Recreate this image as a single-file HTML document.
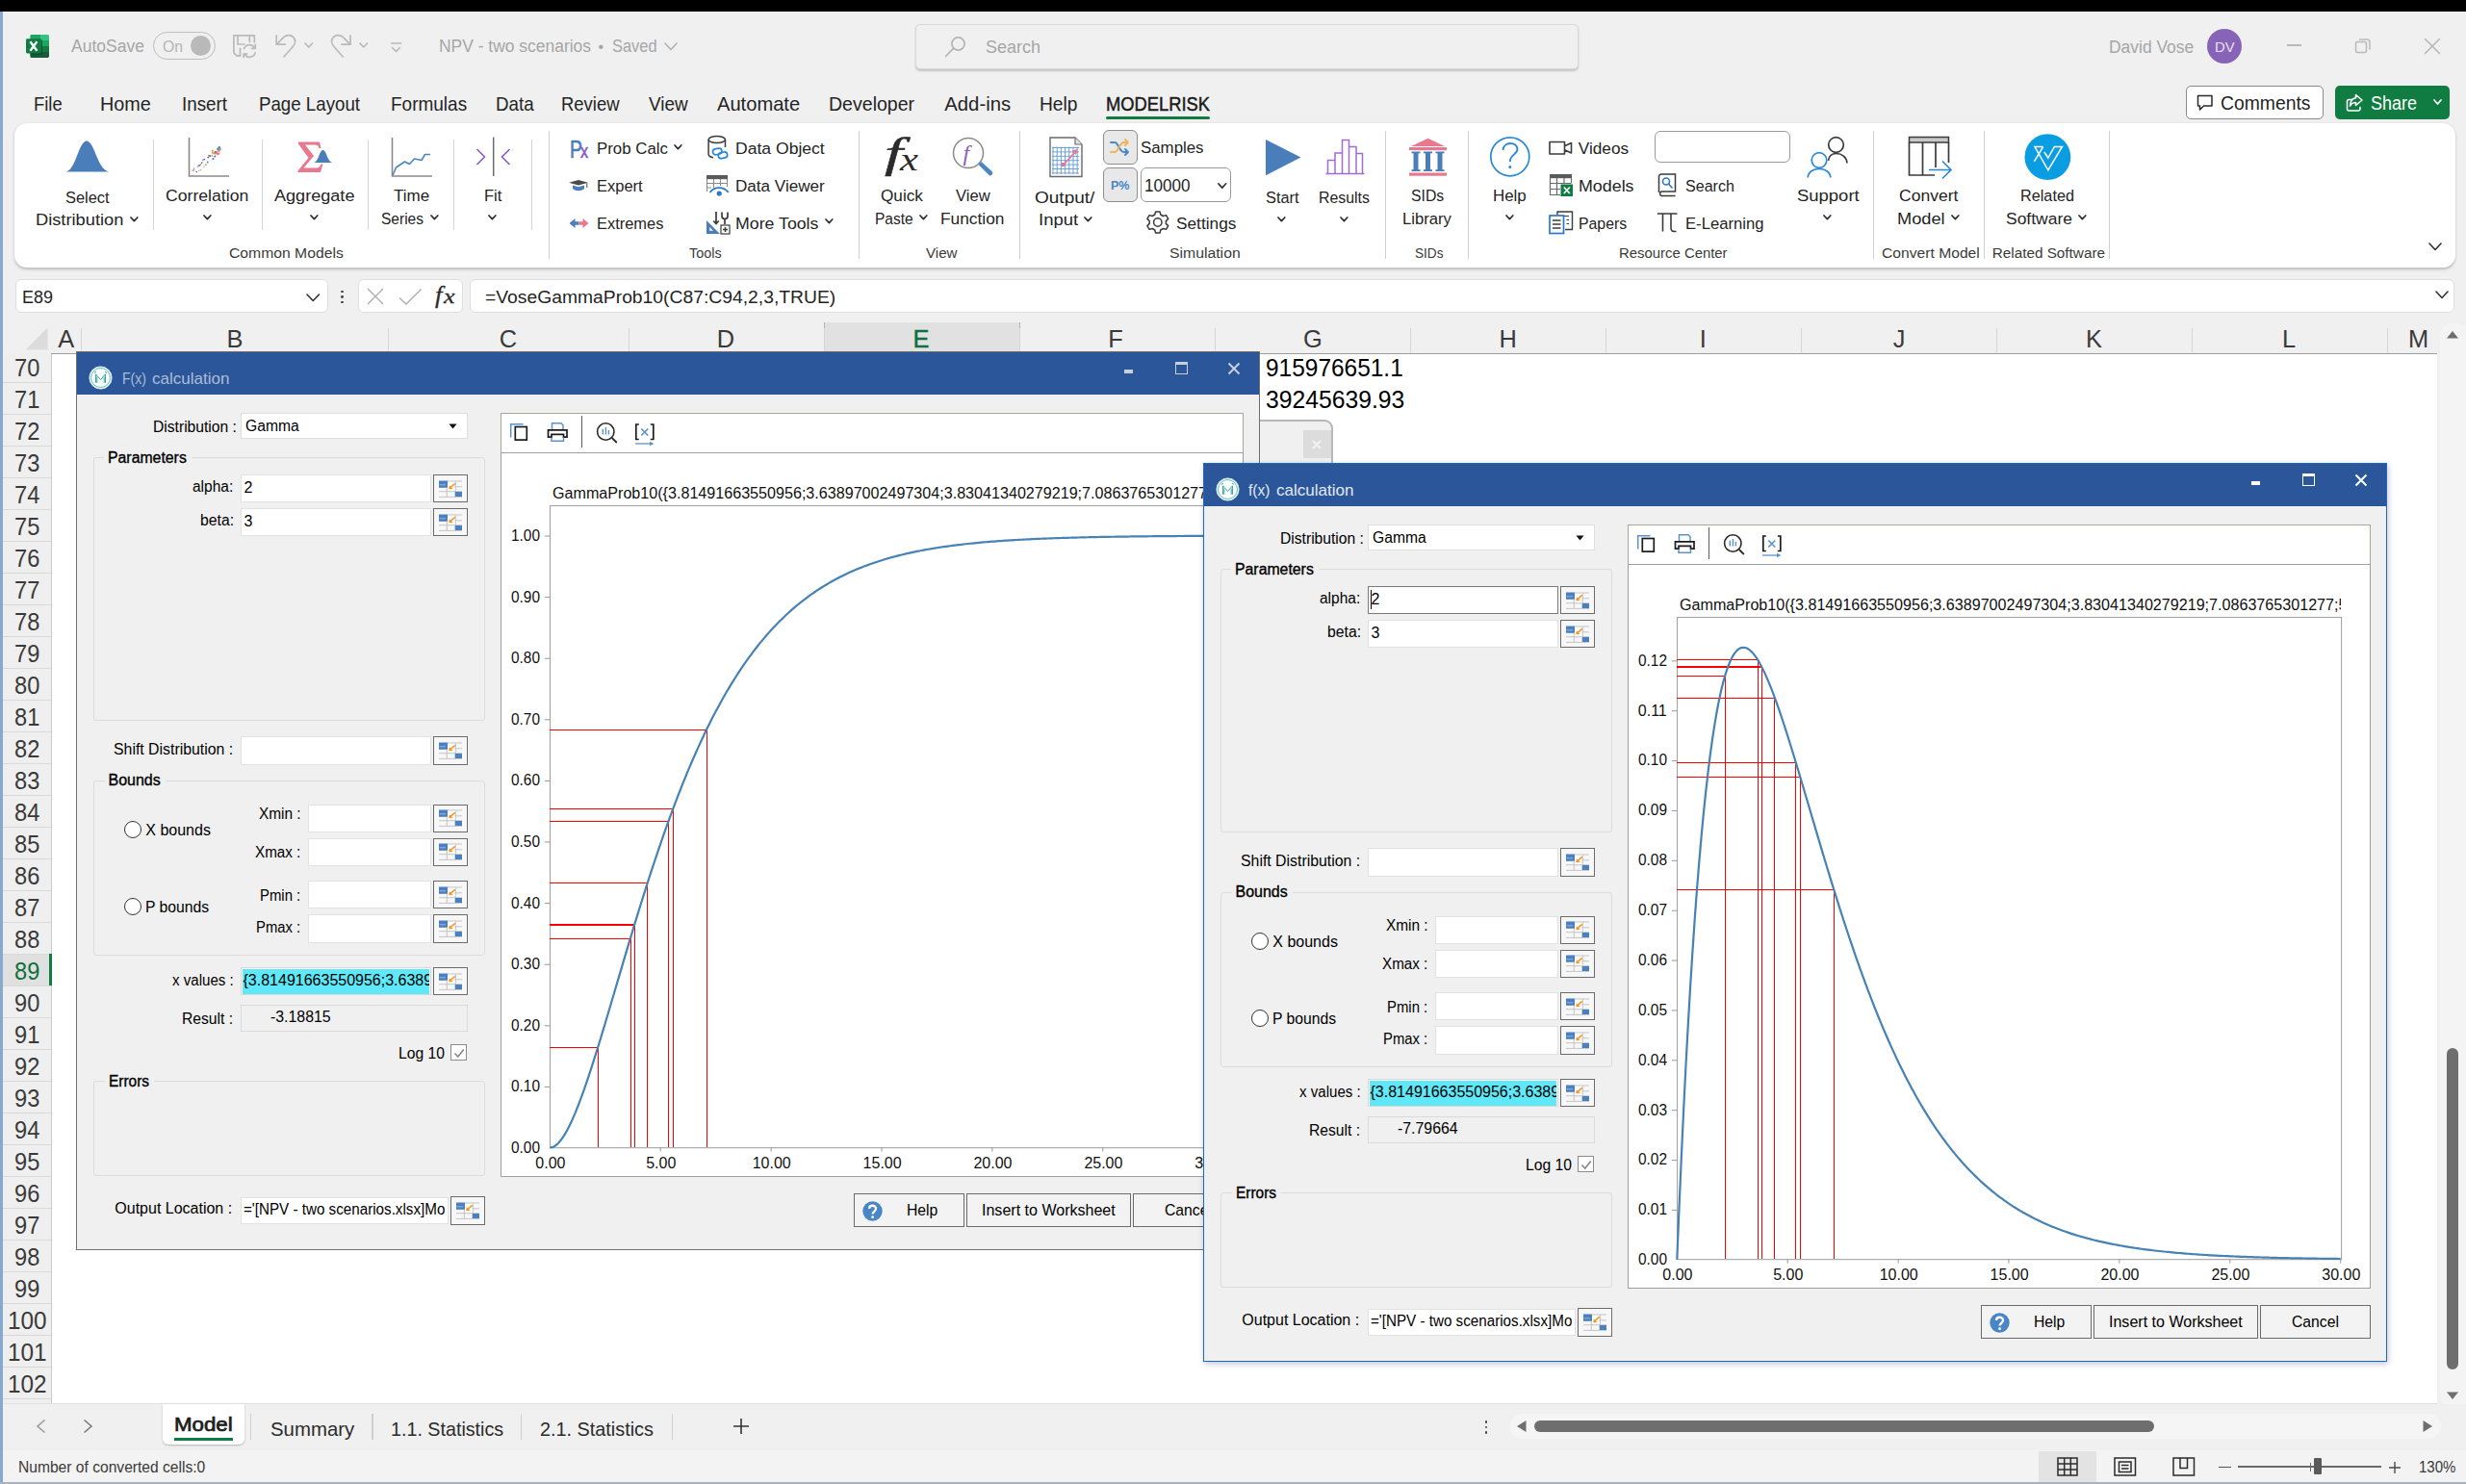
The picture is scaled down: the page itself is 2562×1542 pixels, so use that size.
<!DOCTYPE html>
<html><head><meta charset="utf-8"><title>Excel</title>
<style>
html,body{margin:0;padding:0;}
body{width:2562px;height:1542px;overflow:hidden;position:relative;background:#f0f0f0;font-family:"Liberation Sans",sans-serif;}
.b{position:absolute;box-sizing:border-box;}
.t{position:absolute;white-space:nowrap;line-height:1;transform-origin:0 50%;color:#000;}
svg.b{overflow:visible;}
</style></head><body>
<div class="b" style="left:0px;top:0px;width:2562px;height:1542px;background:#f0f0f0;"></div>
<div class="b" style="left:0px;top:0px;width:2562px;height:12px;background:#000;"></div>
<div class="b" style="left:0px;top:12px;width:3px;height:1530px;background:#86a9d2;"></div>
<div class="b" style="left:0px;top:1540px;width:2562px;height:2px;background:#a9b3bf;"></div>
<svg class="b" style="left:27px;top:36px;" width="24" height="24" viewBox="0 0 24 24">
<clipPath id="xlc"><rect x="4.2" y="0" width="19.8" height="24" rx="1.4"/></clipPath>
<g clip-path="url(#xlc)"><rect x="4.2" y="0" width="10.8" height="6" fill="#21a366"/><rect x="15" y="0" width="9" height="6" fill="#33c481"/>
<rect x="4.2" y="6" width="10.8" height="6" fill="#107c41"/><rect x="15" y="6" width="9" height="6" fill="#21a366"/>
<rect x="4.2" y="12" width="10.8" height="6" fill="#185c37"/><rect x="15" y="12" width="9" height="6" fill="#107c41"/>
<rect x="4.2" y="18" width="19.8" height="6" fill="#185c37"/>
<rect x="1" y="5.2" width="16" height="15.4" rx="1.4" fill="#0a2e1b" opacity="0.55"/></g>
<rect x="0" y="4.2" width="16" height="15.2" rx="1.4" fill="#107c41"/>
<path d="M4.4 7.2 L11.4 16.8 M11.4 7.2 L4.4 16.8" stroke="#fff" stroke-width="2.3"/></svg>
<div class="t" style="left:74px;top:39px;font-size:18px;transform:scaleX(0.9738);color:#a6a6a6;">AutoSave</div>
<div class="b" style="left:159px;top:33px;width:65px;height:29px;border:1.5px solid #bdbdbd;border-radius:15px;"></div>
<div class="t" style="left:169px;top:41px;font-size:16px;transform:scaleX(0.9839);color:#b4b4b4;">On</div>
<div class="b" style="left:198px;top:37px;width:21px;height:21px;background:#b9b9b9;border-radius:11px;"></div>
<svg class="b" style="left:241px;top:35px;" width="27" height="27" viewBox="0 0 27 27"><g fill="none" stroke="#bababa" stroke-width="1.7" stroke-linejoin="miter">
<path d="M9.3 23.2 H5.2 L1.9 19.800 V1.900 H23.300 V9.500"/><path d="M6 1.900 V11 H13.500 M18.300 1.900 V9"/><path d="M8.500 14.800 V23"/>
<path d="M12.300 16.300 a6 6 0 0 1 11.300 -1.200 M24.300 19.200 a6 6 0 0 1 -11.300 1.800"/><path d="M24.300 10.800 V15.300 H19.800 M12.200 25.300 V21 H16.500"/></g></svg>
<svg class="b" style="left:285px;top:34px;" width="26" height="28" viewBox="0 0 26 28"><path d="M2.2 2.2 V12.2 H11.900 M2.600 11.900 L9 5.300 C12 2 17 1.600 19.800 4.600 C22.600 7.800 22 11.500 19 14.800 L9.500 25.500" fill="none" stroke="#bababa" stroke-width="1.7"/></svg>
<svg class="b" style="left:316.45px;top:44.3px;" width="9.5" height="6" viewBox="0 0 9.5 6"><path d="M1 1 L4.75 5 L8.5 1" fill="none" stroke="#b8b8b8" stroke-width="1.7" stroke-linecap="round" stroke-linejoin="round"/></svg>
<svg class="b" style="left:342px;top:34px;" width="26" height="28" viewBox="0 0 26 28"><path d="M2.2 2.2 V12.2 H11.900 M2.600 11.900 L9 5.300 C12 2 17 1.600 19.800 4.600 C22.600 7.800 22 11.500 19 14.800 L9.500 25.500" fill="none" stroke="#bababa" stroke-width="1.7" transform="translate(24.200,0) scale(-1,1)"/></svg>
<svg class="b" style="left:373.45px;top:44.3px;" width="9.5" height="6" viewBox="0 0 9.5 6"><path d="M1 1 L4.75 5 L8.5 1" fill="none" stroke="#b8b8b8" stroke-width="1.7" stroke-linecap="round" stroke-linejoin="round"/></svg>
<svg class="b" style="left:404px;top:43px;" width="16" height="14" viewBox="0 0 16 14"><path d="M2.5 2 H12.5" stroke="#b8b8b8" stroke-width="1.6" stroke-linecap="round"/><path d="M3.5 6.5 L7.5 10.5 L11.5 6.5" fill="none" stroke="#b8b8b8" stroke-width="1.6" stroke-linecap="round" stroke-linejoin="round"/></svg>
<div class="t" style="left:455.5px;top:39px;font-size:18px;transform:scaleX(0.9690);color:#a6a6a6;">NPV - two scenarios</div>
<div class="t" style="left:621.5px;top:41px;font-size:16px;color:#a6a6a6;">•</div>
<div class="t" style="left:635.5px;top:39px;font-size:18px;transform:scaleX(0.9112);color:#a6a6a6;">Saved</div>
<svg class="b" style="left:690px;top:44.25px;" width="14" height="8.5" viewBox="0 0 14 8.5"><path d="M1 1 L7 7.5 L13 1" fill="none" stroke="#b4b4b4" stroke-width="1.7" stroke-linecap="round" stroke-linejoin="round"/></svg>
<div class="b" style="left:950.5px;top:24.5px;width:689.5px;height:47px;background:#f0f0f0;border:1px solid #d9d9d9;border-radius:5px;box-shadow:0 1.5px 2px rgba(0,0,0,.18);"></div>
<svg class="b" style="left:980px;top:36px;" width="26" height="26" viewBox="0 0 26 26"><circle cx="15.5" cy="9.5" r="6.6" fill="none" stroke="#b4b4b4" stroke-width="1.7"/><path d="M10.8 14.2 L2.5 22.5" stroke="#b4b4b4" stroke-width="1.7" stroke-linecap="round"/></svg>
<div class="t" style="left:1023.5px;top:40px;font-size:18.5px;transform:scaleX(0.9726);color:#a6a6a6;">Search</div>
<div class="t" style="left:2190.5px;top:40px;font-size:18px;transform:scaleX(0.9686);color:#a6a6a6;">David Vose</div>
<div class="b" style="left:2293px;top:30px;width:36px;height:36px;background:#8764b8;border-radius:18px;"></div>
<div class="t" style="left:2300.75px;top:41px;font-size:15.5px;transform:scaleX(0.9522);color:#e9e0f5;">DV</div>
<div class="b" style="left:2375.5px;top:46px;width:15.5px;height:1.5px;background:#b9b9b9;"></div>
<svg class="b" style="left:2445px;top:38px;" width="20" height="20" viewBox="0 0 20 20"><rect x="2.5" y="5.5" width="11" height="11" rx="2" fill="none" stroke="#b9b9b9" stroke-width="1.5"/><path d="M6 3 H14 a3 3 0 0 1 3 3 V13.5" fill="none" stroke="#b9b9b9" stroke-width="1.5"/></svg>
<svg class="b" style="left:2517px;top:38px;" width="20" height="20" viewBox="0 0 20 20"><path d="M2.5 2.5 L17.5 17.5 M17.5 2.5 L2.5 17.5" stroke="#b4b4b4" stroke-width="1.5" stroke-linecap="round"/></svg>
<div class="t" style="left:35.2px;top:98px;font-size:20.3px;transform:scaleX(0.9082);color:#242424;">File</div>
<div class="t" style="left:104.3px;top:98px;font-size:20.3px;transform:scaleX(0.9767);color:#242424;">Home</div>
<div class="t" style="left:188.6px;top:98px;font-size:20.3px;transform:scaleX(0.9257);color:#242424;">Insert</div>
<div class="t" style="left:268.5px;top:98px;font-size:20.3px;transform:scaleX(0.9219);color:#242424;">Page Layout</div>
<div class="t" style="left:405.6px;top:98px;font-size:20.3px;transform:scaleX(0.9361);color:#242424;">Formulas</div>
<div class="t" style="left:514.7px;top:98px;font-size:20.3px;transform:scaleX(0.9255);color:#242424;">Data</div>
<div class="t" style="left:583px;top:98px;font-size:20.3px;transform:scaleX(0.9096);color:#242424;">Review</div>
<div class="t" style="left:673.6px;top:98px;font-size:20.3px;transform:scaleX(0.9317);color:#242424;">View</div>
<div class="t" style="left:744.5px;top:98px;font-size:20.3px;transform:scaleX(0.9921);color:#242424;">Automate</div>
<div class="t" style="left:861.4px;top:98px;font-size:20.3px;transform:scaleX(0.9640);color:#242424;">Developer</div>
<div class="t" style="left:981.3px;top:98px;font-size:20.3px;color:#242424;">Add-ins</div>
<div class="t" style="left:1079.6px;top:98px;font-size:20.3px;transform:scaleX(0.9459);color:#242424;">Help</div>
<div class="t" style="left:1148.6px;top:98px;font-size:20.3px;transform:scaleX(0.9033);color:#1a1a1a;-webkit-text-stroke:0.45px #1a1a1a;">MODELRISK</div>
<div class="b" style="left:1148.5px;top:120.5px;width:108.5px;height:3px;background:#107c41;border-radius:1.5px;"></div>
<div class="b" style="left:2270.5px;top:88.5px;width:143px;height:35px;background:#fff;border:1px solid #8a8a8a;border-radius:5px;"></div>
<svg class="b" style="left:2281px;top:97px;" width="20" height="20" viewBox="0 0 20 20"><path d="M2.5 2.5 H17 V13 H8.5 L4.5 17 V13 H2.5 Z" fill="none" stroke="#2b2b2b" stroke-width="1.5" stroke-linejoin="round"/></svg>
<div class="t" style="left:2306.5px;top:98px;font-size:19.5px;transform:scaleX(0.9917);color:#242424;">Comments</div>
<div class="b" style="left:2426px;top:88.5px;width:119px;height:35px;background:#107c41;border-radius:5px;"></div>
<svg class="b" style="left:2436px;top:96px;" width="20" height="22" viewBox="0 0 20 22"><g fill="none" stroke="#fff" stroke-width="1.6" stroke-linejoin="round" stroke-linecap="round"><path d="M8 7.5 H4.5 a2 2 0 0 0 -2 2 V17 a2 2 0 0 0 2 2 H14 a2 2 0 0 0 2 -2 V15.5"/><path d="M11.5 2.5 L18 8 L11.5 13.5 V10.5 C8.5 10.5 7 11.5 5.5 14 C5.8 9.5 8 6 11.5 5.7 Z"/></g></svg>
<div class="t" style="left:2462.5px;top:98px;font-size:19.5px;transform:scaleX(0.9226);color:#fff;">Share</div>
<svg class="b" style="left:2528px;top:103px;" width="9" height="6" viewBox="0 0 9 6"><path d="M1 1 L4.5 5 L8 1" fill="none" stroke="#fff" stroke-width="1.7" stroke-linecap="round" stroke-linejoin="round"/></svg>
<div class="b" style="left:15px;top:128px;width:2535.5px;height:150px;background:#fff;border-radius:13px;box-shadow:0 1.5px 3px rgba(0,0,0,.22);"></div>
<div class="b" style="left:158.9px;top:145px;width:1.2px;height:93.5px;background:#d4d4d4;"></div>
<div class="b" style="left:271.8px;top:145px;width:1.2px;height:93.5px;background:#d4d4d4;"></div>
<div class="b" style="left:381.8px;top:145px;width:1.2px;height:93.5px;background:#d4d4d4;"></div>
<div class="b" style="left:470.7px;top:145px;width:1.2px;height:93.5px;background:#d4d4d4;"></div>
<div class="b" style="left:551.6px;top:145px;width:1.2px;height:93.5px;background:#d4d4d4;"></div>
<div class="b" style="left:569.9px;top:135.5px;width:1.2px;height:133px;background:#cfcfcf;"></div>
<div class="b" style="left:891.7px;top:135.5px;width:1.2px;height:133px;background:#cfcfcf;"></div>
<div class="b" style="left:1058.7px;top:135.5px;width:1.2px;height:133px;background:#cfcfcf;"></div>
<div class="b" style="left:1438.8px;top:135.5px;width:1.2px;height:133px;background:#cfcfcf;"></div>
<div class="b" style="left:1524.7px;top:135.5px;width:1.2px;height:133px;background:#cfcfcf;"></div>
<div class="b" style="left:1945.9px;top:135.5px;width:1.2px;height:133px;background:#cfcfcf;"></div>
<div class="b" style="left:2060.9px;top:135.5px;width:1.2px;height:133px;background:#cfcfcf;"></div>
<div class="b" style="left:2191px;top:135.5px;width:1.2px;height:133px;background:#cfcfcf;"></div>
<svg class="b" style="left:66px;top:143px;" width="52" height="38" viewBox="0 0 52 38"><path d="M2 35.5 C13 34 15 5 24 3.2 C33 5 35 34 48 35.5 Z" fill="#4a7ebb"/></svg>
<div class="t" style="left:68.4px;top:197px;font-size:17.2px;transform:scaleX(0.9540);color:#242424;">Select</div>
<div class="t" style="left:37px;top:220px;font-size:17.2px;transform:scaleX(1.0624);color:#242424;">Distribution</div>
<svg class="b" style="left:135.1px;top:224.65px;" width="8.8" height="5.7" viewBox="0 0 8.8 5.7"><path d="M1 1 L4.4 4.7 L7.8 1" fill="none" stroke="#2e2e2e" stroke-width="1.7" stroke-linecap="round" stroke-linejoin="round"/></svg>
<svg class="b" style="left:195px;top:143px;" width="44" height="43" viewBox="0 0 44 43"><path d="M1.5 0 V40 H43" fill="none" stroke="#8a8a8a" stroke-width="1.6"/><circle cx="10.4" cy="30.1" r="0.7" fill="#4a7ebb"/><circle cx="6.0" cy="34.7" r="0.6" fill="#f0b24a"/><circle cx="28.9" cy="15.3" r="1.2" fill="#4a7ebb"/><circle cx="17.1" cy="30.1" r="0.8" fill="#f0b24a"/><circle cx="13.9" cy="33.7" r="0.7" fill="#f0b24a"/><circle cx="26.1" cy="16.0" r="1.2" fill="#f0b24a"/><circle cx="8.9" cy="35.6" r="0.6" fill="#4a7ebb"/><circle cx="11.5" cy="29.0" r="0.7" fill="#4a7ebb"/><circle cx="26.2" cy="14.9" r="1.2" fill="#f0b24a"/><circle cx="28.9" cy="15.5" r="1.2" fill="#4a7ebb"/><circle cx="13.5" cy="27.7" r="0.8" fill="#f0b24a"/><circle cx="25.7" cy="13.8" r="1.2" fill="#f0b24a"/><circle cx="20.7" cy="25.5" r="0.9" fill="#4a7ebb"/><circle cx="31.4" cy="12.0" r="1.3" fill="#4a7ebb"/><circle cx="22.9" cy="19.0" r="1.0" fill="#e8748c"/><circle cx="25.3" cy="19.0" r="1.1" fill="#f0b24a"/><circle cx="6.5" cy="32.2" r="0.6" fill="#4a7ebb"/><circle cx="21.3" cy="20.5" r="1.0" fill="#4a7ebb"/><circle cx="11.5" cy="28.5" r="0.8" fill="#e8748c"/><circle cx="32.5" cy="16.6" r="1.2" fill="#f0b24a"/><circle cx="5.4" cy="39.3" r="0.6" fill="#e8748c"/><circle cx="31.1" cy="17.1" r="1.2" fill="#e8748c"/><circle cx="12.4" cy="29.1" r="0.8" fill="#4a7ebb"/><circle cx="13.2" cy="28.1" r="0.7" fill="#4a7ebb"/><circle cx="4.0" cy="34.0" r="0.6" fill="#f0b24a"/><circle cx="33.3" cy="12.1" r="1.3" fill="#4a7ebb"/><circle cx="16.0" cy="23.2" r="0.9" fill="#e8748c"/><circle cx="26.4" cy="22.1" r="1.1" fill="#4a7ebb"/><circle cx="7.1" cy="33.8" r="0.6" fill="#e8748c"/><circle cx="9.4" cy="35.5" r="0.6" fill="#e8748c"/><circle cx="22.1" cy="18.8" r="1.0" fill="#e8748c"/><circle cx="14.8" cy="26.1" r="0.9" fill="#4a7ebb"/><circle cx="23.1" cy="19.0" r="1.0" fill="#4a7ebb"/><circle cx="5.6" cy="33.9" r="0.6" fill="#4a7ebb"/><circle cx="26.4" cy="16.3" r="1.1" fill="#f0b24a"/><circle cx="9.5" cy="35.7" r="0.6" fill="#4a7ebb"/><circle cx="18.9" cy="27.9" r="0.9" fill="#e8748c"/><circle cx="17.3" cy="22.6" r="0.9" fill="#4a7ebb"/><circle cx="32.4" cy="13.8" r="1.2" fill="#e8748c"/><circle cx="28.3" cy="19.5" r="1.1" fill="#4a7ebb"/><circle cx="13.3" cy="33.4" r="0.7" fill="#f0b24a"/><circle cx="33.2" cy="11.4" r="1.2" fill="#f0b24a"/><circle cx="32.8" cy="10.2" r="1.3" fill="#4a7ebb"/><circle cx="11.8" cy="34.6" r="0.6" fill="#e8748c"/><circle cx="30.4" cy="15.4" r="1.2" fill="#e8748c"/><circle cx="28.3" cy="16.6" r="1.1" fill="#e8748c"/></svg>
<div class="t" style="left:172.4px;top:195px;font-size:17.2px;transform:scaleX(1.0259);color:#242424;">Correlation</div>
<svg class="b" style="left:210.8px;top:222.75px;" width="8.8" height="5.7" viewBox="0 0 8.8 5.7"><path d="M1 1 L4.4 4.7 L7.8 1" fill="none" stroke="#2e2e2e" stroke-width="1.7" stroke-linecap="round" stroke-linejoin="round"/></svg>
<svg class="b" style="left:307px;top:145px;" width="40" height="36" viewBox="0 0 40 36"><path d="M3 2.5 H25 L26.5 9 H24.5 C24 6.5 23 5.5 20 5.5 H10 L19 17 L8.5 29.5 H21 C24.5 29.5 25.5 28 26.5 25.5 H28.5 L26 34 H2.5 V32.5 L13.5 19 L3 4.5 Z" fill="#e8788f"/><path d="M19 24 C24 23.5 24.5 11.5 28.5 10.8 C32.5 11.5 33 23.5 38.5 24 Z" fill="#4a7ebb"/></svg>
<div class="t" style="left:285.3px;top:195px;font-size:17.2px;transform:scaleX(1.0519);color:#242424;">Aggregate</div>
<svg class="b" style="left:321.8px;top:222.75px;" width="8.8" height="5.7" viewBox="0 0 8.8 5.7"><path d="M1 1 L4.4 4.7 L7.8 1" fill="none" stroke="#2e2e2e" stroke-width="1.7" stroke-linecap="round" stroke-linejoin="round"/></svg>
<svg class="b" style="left:406px;top:143px;" width="44" height="43" viewBox="0 0 44 43"><path d="M1.5 0 V40 H43" fill="none" stroke="#8a8a8a" stroke-width="1.6"/><path d="M2 39 L5.5 31 L14.5 25 L19.5 27.5 L24.5 22 L32 23.5 L35.5 17.5 L41 17.5" fill="none" stroke="#4a86c5" stroke-width="1.6" stroke-linejoin="round"/></svg>
<div class="t" style="left:408.5px;top:195px;font-size:17.2px;transform:scaleX(0.9898);color:#242424;">Time</div>
<div class="t" style="left:395.8px;top:219px;font-size:17.2px;transform:scaleX(0.9023);color:#242424;">Series</div>
<svg class="b" style="left:446.9px;top:222.75px;" width="8.8" height="5.7" viewBox="0 0 8.8 5.7"><path d="M1 1 L4.4 4.7 L7.8 1" fill="none" stroke="#2e2e2e" stroke-width="1.7" stroke-linecap="round" stroke-linejoin="round"/></svg>
<svg class="b" style="left:494px;top:142px;" width="38" height="42" viewBox="0 0 38 42"><path d="M18.7 0.5 V41" stroke="#6a6a6a" stroke-width="1.5"/><path d="M1.5 13 L9.5 21 L1.5 29 M35.5 13 L27.5 21 L35.5 29" fill="none" stroke="#8a5cc7" stroke-width="1.6"/></svg>
<div class="t" style="left:502.6px;top:195px;font-size:17.2px;transform:scaleX(0.9629);color:#242424;">Fit</div>
<svg class="b" style="left:506.5px;top:222.75px;" width="8.8" height="5.7" viewBox="0 0 8.8 5.7"><path d="M1 1 L4.4 4.7 L7.8 1" fill="none" stroke="#2e2e2e" stroke-width="1.7" stroke-linecap="round" stroke-linejoin="round"/></svg>
<div class="t" style="left:237.5px;top:255px;font-size:15.3px;transform:scaleX(1.0273);color:#3b3b3b;">Common Models</div>
<div class="t" style="left:591.8px;top:142px;font-size:26.6px;transform:scaleX(0.7271);color:#4a7ebb;-webkit-text-stroke:0.700px #4a7ebb;">P</div>
<div class="t" style="left:603.1px;top:148px;font-size:19.5px;transform:scaleX(0.8308);color:#8a5cc7;-webkit-text-stroke:0.600px #8a5cc7;">x</div>
<div class="t" style="left:620px;top:146px;font-size:17.2px;transform:scaleX(0.9798);color:#242424;">Prob Calc</div>
<svg class="b" style="left:699.8px;top:150.35px;" width="8.8" height="5.7" viewBox="0 0 8.8 5.7"><path d="M1 1 L4.4 4.7 L7.8 1" fill="none" stroke="#2e2e2e" stroke-width="1.7" stroke-linecap="round" stroke-linejoin="round"/></svg>
<svg class="b" style="left:590px;top:186px;" width="22" height="14" viewBox="0 0 22 14"><path d="M1 3.8 L11 1 L21 3.8 L11 6.6 Z" fill="#4a4a4a"/><path d="M5 6.5 V10 C8 13 14 13 17 10 V6.5 L11 8.2 Z" fill="#4a7ebb"/><path d="M19.8 4.2 V9" stroke="#4a4a4a" stroke-width="1"/></svg>
<div class="t" style="left:620px;top:185px;font-size:17.2px;transform:scaleX(0.9596);color:#242424;">Expert</div>
<svg class="b" style="left:590.5px;top:225.5px;" width="21" height="12" viewBox="0 0 21 12"><path d="M0.5 6 L6.5 1 V4.2 H10.5 V7.8 H6.5 V11 Z" fill="#4a7ebb"/><path d="M20.5 6 L14.5 1 V4.2 H10.5 V7.8 H14.5 V11 Z" fill="#e8788f"/></svg>
<div class="t" style="left:620px;top:224px;font-size:17.2px;transform:scaleX(0.9555);color:#242424;">Extremes</div>
<svg class="b" style="left:734px;top:140px;" width="25" height="26" viewBox="0 0 25 26"><g fill="none" stroke="#3b3b3b" stroke-width="1.500"><ellipse cx="10.800" cy="5" rx="8.700" ry="3.600"/><path d="M2.100 5 V20.500 C2.500 22.300 4.500 23.300 7 23.800 M19.500 5 V13"/></g><g fill="none"><rect x="6.500" y="14.500" width="9.500" height="6" rx="3" transform="rotate(-12 11 17.500)" stroke="#fff" stroke-width="3.600"/><rect x="12.200" y="18.300" width="9.500" height="6" rx="3" transform="rotate(-12 17 21.300)" stroke="#fff" stroke-width="3.600"/><rect x="6.500" y="14.500" width="9.500" height="6" rx="3" transform="rotate(-12 11 17.500)" stroke="#2b88d8" stroke-width="1.700"/><rect x="12.200" y="18.300" width="9.500" height="6" rx="3" transform="rotate(-12 17 21.300)" stroke="#2b88d8" stroke-width="1.700"/></g></svg>
<div class="t" style="left:764px;top:146px;font-size:17.2px;transform:scaleX(1.0218);color:#242424;">Data Object</div>
<svg class="b" style="left:733px;top:180.5px;" width="25" height="24" viewBox="0 0 25 24"><rect x="1" y="1" width="22" height="4.2" fill="#5a5a5a"/><g fill="none" stroke="#8a8a8a" stroke-width="1.1"><path d="M1.5 5 V18 M22.5 5 V13 M8.5 5 V14 M15.5 5 V12 M1.5 9.5 H22.5 M1.5 14 H6"/></g><path d="M4.5 19 C9 12.5 19 12.5 23.8 19" fill="none" stroke="#2b78c8" stroke-width="1.7"/><circle cx="14.2" cy="20" r="2.6" fill="#2b78c8"/></svg>
<div class="t" style="left:764px;top:185px;font-size:17.2px;transform:scaleX(0.9938);color:#242424;">Data Viewer</div>
<svg class="b" style="left:732.5px;top:218.5px;" width="26" height="25" viewBox="0 0 26 25"><path d="M1 24 V10 L15 24 Z M4.2 20.8 V17 L8 20.8 Z" fill="#4a7ebb" fill-rule="evenodd"/><g stroke="#3b3b3b" stroke-width="1.7" fill="none"><path d="M11 1 V13 M8.2 10.5 L11 13.5 L13.8 10.5"/><path d="M20 9 V14"/><path d="M17 1.5 V5.5 a3 3 0 0 0 6 0 V1.5"/></g><rect x="16" y="15" width="9" height="9" fill="#fff" stroke="#3b3b3b" stroke-width="1.2"/><path d="M20.5 17 V22 M18 19.5 H23" stroke="#3b3b3b" stroke-width="1.5"/></svg>
<div class="t" style="left:764px;top:224px;font-size:17.2px;transform:scaleX(1.0320);color:#242424;">More Tools</div>
<svg class="b" style="left:857px;top:226.75px;" width="8.8" height="5.7" viewBox="0 0 8.8 5.7"><path d="M1 1 L4.4 4.7 L7.8 1" fill="none" stroke="#2e2e2e" stroke-width="1.7" stroke-linecap="round" stroke-linejoin="round"/></svg>
<div class="t" style="left:716.4px;top:255px;font-size:15.3px;transform:scaleX(0.9409);color:#3b3b3b;">Tools</div>
<div class="t" style="left:918.8px;top:138px;font-size:44px;transform:scaleX(1.5401);color:#2b2b2b;font-style:italic;font-family:'Liberation Serif',serif;-webkit-text-stroke:0.500px #2b2b2b;">f</div>
<div class="t" style="left:935.05px;top:149px;font-size:34px;transform:scaleX(1.2550);color:#2b2b2b;font-style:italic;font-family:'Liberation Serif',serif;">x</div>
<div class="t" style="left:915px;top:195px;font-size:17.2px;color:#242424;">Quick</div>
<div class="t" style="left:908.8px;top:219px;font-size:17.2px;transform:scaleX(0.9027);color:#242424;">Paste</div>
<svg class="b" style="left:954.5px;top:222.75px;" width="8.8" height="5.7" viewBox="0 0 8.8 5.7"><path d="M1 1 L4.4 4.7 L7.8 1" fill="none" stroke="#2e2e2e" stroke-width="1.7" stroke-linecap="round" stroke-linejoin="round"/></svg>
<svg class="b" style="left:988px;top:141px;" width="46" height="44" viewBox="0 0 46 44"><circle cx="18" cy="18" r="15.5" fill="#fff" stroke="#8a8a8a" stroke-width="1.5"/><path d="M28.5 30 L31.5 27 L42.5 37 a2.4 2.4 0 0 1 -3.5 3.6 Z" fill="#4a86c5"/><text x="12.5" y="26" font-family="Liberation Serif" font-style="italic" font-size="24" fill="#8a5cc7">f</text></svg>
<div class="t" style="left:992.8px;top:195px;font-size:17.2px;transform:scaleX(0.9645);color:#242424;">View</div>
<div class="t" style="left:976.8px;top:219px;font-size:17.2px;transform:scaleX(1.0082);color:#242424;">Function</div>
<div class="t" style="left:961.5px;top:255px;font-size:15.3px;transform:scaleX(0.9871);color:#3b3b3b;">View</div>
<svg class="b" style="left:1090px;top:141.5px;" width="36" height="43" viewBox="0 0 36 43"><path d="M1 1 H27 L34 8 V41.5 H1 Z" fill="#fff" stroke="#6a6a6a" stroke-width="1.4"/><path d="M27 1 V8 H34" fill="#e4e4e4" stroke="#6a6a6a" stroke-width="1.2"/><g stroke="#5b9bd5" stroke-width="0.9" fill="none"><path d="M4 10.5 V39" /><path d="M8.2 10.5 V39" /><path d="M12.4 10.5 V39" /><path d="M16.6 10.5 V39" /><path d="M20.8 10.5 V39" /><path d="M25 10.5 V39" /><path d="M29.2 10.5 V39" /><path d="M3 11.5 H31" /><path d="M3 15.9 H31" /><path d="M3 20.3 H31" /><path d="M3 24.7 H31" /><path d="M3 29.1 H31" /><path d="M3 33.5 H31" /><path d="M3 37.9 H31" /></g><path d="M15 29 L28 15" stroke="#e8788f" stroke-width="1.8"/><path d="M29.5 13 L23.5 14.5 L28 19 Z" fill="#e8788f"/><rect x="13" y="27" width="4" height="4" fill="#e8788f"/></svg>
<div class="t" style="left:1075px;top:197px;font-size:17.2px;transform:scaleX(1.1061);color:#242424;">Output/</div>
<div class="t" style="left:1078.6px;top:220px;font-size:17.2px;transform:scaleX(1.0770);color:#242424;">Input</div>
<svg class="b" style="left:1126.3px;top:224.65px;" width="8.8" height="5.7" viewBox="0 0 8.8 5.7"><path d="M1 1 L4.4 4.7 L7.8 1" fill="none" stroke="#2e2e2e" stroke-width="1.7" stroke-linecap="round" stroke-linejoin="round"/></svg>
<div class="b" style="left:1145.8px;top:135px;width:35.8px;height:35.6px;background:#e8e8e8;border:1px solid #8f8f8f;border-radius:6px;"></div>
<svg class="b" style="left:1152.3px;top:142.5px;" width="23" height="20" viewBox="0 0 23 20"><g fill="none" stroke-width="1.9" stroke-linecap="round" stroke-linejoin="round"><path d="M2 5 H6 C10 5 11 15 15.5 15 H20 M17 12 L20 15 L17 18" stroke="#4a86c5"/><path d="M2 15 H6 C10 15 11 5 15.5 5 H20 M17 2 L20 5 L17 8" stroke="#f0b45a"/></g></svg>
<div class="t" style="left:1185.4px;top:145px;font-size:17.2px;transform:scaleX(0.9802);color:#242424;">Samples</div>
<div class="b" style="left:1145.8px;top:174px;width:35.8px;height:35.8px;background:#e8e8e8;border:1px solid #8f8f8f;border-radius:6px;"></div>
<div class="t" style="left:1154px;top:186px;font-size:13.5px;transform:scaleX(0.9283);color:#4a86c5;font-weight:700;">P%</div>
<div class="b" style="left:1185px;top:174px;width:94px;height:35.8px;background:#fff;border:1px solid #9a9a9a;border-radius:6px;"></div>
<div class="t" style="left:1189.4px;top:185px;font-size:17.8px;transform:scaleX(0.9616);color:#242424;">10000</div>
<svg class="b" style="left:1265.25px;top:189.7px;" width="9.5" height="6.2" viewBox="0 0 9.5 6.2"><path d="M1 1 L4.75 5.2 L8.5 1" fill="none" stroke="#2e2e2e" stroke-width="1.7" stroke-linecap="round" stroke-linejoin="round"/></svg>
<svg class="b" style="left:1190px;top:219px;" width="26" height="25" viewBox="0 0 26 25"><g fill="none" stroke="#3b3b3b" stroke-width="1.5" stroke-linejoin="round"><circle cx="12.8" cy="12" r="4.2"/><path d="M10.6 1.5 H15 L15.8 4.6 L18.4 6.1 L21.5 5.2 L23.7 9 L21.4 11.2 V14 L23.7 16.2 L21.5 20 L18.4 19.1 L15.8 20.6 L15 23.7 H10.6 L9.8 20.6 L7.2 19.1 L4.1 20 L1.9 16.2 L4.2 14 V11.2 L1.9 9 L4.1 5.2 L7.2 6.1 L9.8 4.6 Z" transform="translate(0,-0.6)"/></g></svg>
<div class="t" style="left:1221.6px;top:224px;font-size:17.2px;transform:scaleX(1.0041);color:#242424;">Settings</div>
<div class="t" style="left:1214.5px;top:255px;font-size:15.3px;transform:scaleX(1.0317);color:#3b3b3b;">Simulation</div>
<svg class="b" style="left:1314px;top:144px;" width="39" height="39" viewBox="0 0 39 39"><path d="M1 1 L37.5 19.5 L1 38.2 Z" fill="#4a7ebb"/></svg>
<div class="t" style="left:1314.7px;top:197px;font-size:17.2px;transform:scaleX(0.9525);color:#242424;">Start</div>
<svg class="b" style="left:1326.6px;top:224.65px;" width="8.8" height="5.7" viewBox="0 0 8.8 5.7"><path d="M1 1 L4.4 4.7 L7.8 1" fill="none" stroke="#2e2e2e" stroke-width="1.7" stroke-linecap="round" stroke-linejoin="round"/></svg>
<svg class="b" style="left:1377px;top:144px;" width="41" height="38" viewBox="0 0 41 38"><g fill="none" stroke="#a06cd5" stroke-width="1.5"><path d="M0.5 36.5 H40.5"/><path d="M2.5 36.5 V22.5 H10 V36.5 M10 36.5 V15 H17.5 V36.5 M17.5 36.5 V1.5 H24.5 V36.5 M24.5 36.5 V8.5 H32 V36.5 M32 36.5 V15.5 H38.5 V36.5"/></g></svg>
<div class="t" style="left:1370px;top:197px;font-size:17.2px;transform:scaleX(0.9242);color:#242424;">Results</div>
<svg class="b" style="left:1391.5px;top:224.65px;" width="8.8" height="5.7" viewBox="0 0 8.8 5.7"><path d="M1 1 L4.4 4.7 L7.8 1" fill="none" stroke="#2e2e2e" stroke-width="1.7" stroke-linecap="round" stroke-linejoin="round"/></svg>
<svg class="b" style="left:1463px;top:143px;" width="41" height="41" viewBox="0 0 41 41"><path d="M3 9 L20.5 0.8 L38 9 Z" fill="#e8788f"/><rect x="1" y="10" width="39" height="3.2" fill="#e8788f"/><rect x="1" y="36.5" width="39" height="3.2" fill="#e8788f"/><g fill="#4a7ebb"><rect x="5.500" y="16" width="5" height="18"/><rect x="18" y="16" width="5" height="18"/><rect x="30.500" y="16" width="5" height="18"/><rect x="3.5" y="14.5" width="9" height="1.8"/><rect x="16" y="14.5" width="9" height="1.8"/><rect x="28.500" y="14.5" width="9" height="1.8"/><rect x="3.5" y="33.200" width="9" height="1.8"/><rect x="16" y="33.2" width="9" height="1.8"/><rect x="28.5" y="33.2" width="9" height="1.8"/></g></svg>
<div class="t" style="left:1465.7px;top:195px;font-size:17.2px;transform:scaleX(0.9176);color:#242424;">SIDs</div>
<div class="t" style="left:1457px;top:219px;font-size:17.2px;transform:scaleX(0.9699);color:#242424;">Library</div>
<div class="t" style="left:1469.7px;top:255px;font-size:15.3px;transform:scaleX(0.8898);color:#3b3b3b;">SIDs</div>
<svg class="b" style="left:1547px;top:141px;" width="44" height="44" viewBox="0 0 44 44"><circle cx="21.8" cy="21.8" r="20" fill="none" stroke="#2b88d8" stroke-width="1.7"/><path d="M14.5 15 C15 5.5 29.500 6 29.500 14 C29.500 19.500 21.8 19.500 21.8 27" fill="none" stroke="#2b88d8" stroke-width="1.9"/><circle cx="21.8" cy="32.5" r="1.5" fill="#2b88d8"/></svg>
<div class="t" style="left:1550.9px;top:195px;font-size:17.2px;transform:scaleX(0.9836);color:#242424;">Help</div>
<svg class="b" style="left:1563.6px;top:222.75px;" width="8.8" height="5.7" viewBox="0 0 8.8 5.7"><path d="M1 1 L4.4 4.7 L7.8 1" fill="none" stroke="#2e2e2e" stroke-width="1.7" stroke-linecap="round" stroke-linejoin="round"/></svg>
<svg class="b" style="left:1608.5px;top:145.5px;" width="26" height="16" viewBox="0 0 26 16"><path d="M1 1.500 H16.500 V14 H1 Z M16.500 5.800 L23.500 2.500 V13 L16.500 9.800" fill="none" stroke="#3b3b3b" stroke-width="1.6" stroke-linejoin="round"/></svg>
<div class="t" style="left:1639.8px;top:146px;font-size:17.2px;color:#242424;">Videos</div>
<svg class="b" style="left:1608.5px;top:180px;" width="26" height="25" viewBox="0 0 26 25"><rect x="1" y="1" width="23" height="4.200" fill="#5a5a5a"/><g fill="none" stroke="#6a6a6a" stroke-width="1.2"><path d="M1.500 5 V22.500 H12 M8.500 5 V22.500 M16 5 V10 M23.500 5 V10 M1.500 10.500 H23.500 M1.500 16.500 H12"/></g><rect x="12.500" y="11.500" width="12.500" height="12.500" fill="#107c41"/><path d="M15.800 14.500 L21.800 21 M21.800 14.500 L15.800 21" stroke="#fff" stroke-width="1.700"/></svg>
<div class="t" style="left:1639.8px;top:185px;font-size:17.2px;transform:scaleX(1.0387);color:#242424;">Models</div>
<svg class="b" style="left:1608.5px;top:218.5px;" width="26" height="25" viewBox="0 0 26 25"><path d="M9 4.500 V1 H24.500 V19.500 H17" fill="none" stroke="#3b3b3b" stroke-width="1.400"/><path d="M13 5.500 H21 M18.500 9.500 H21 M18.500 13.500 H21" stroke="#3b3b3b" stroke-width="1.200"/><rect x="1" y="5" width="14.500" height="18.500" fill="#fff" stroke="#2b78c8" stroke-width="1.700"/><path d="M4 10 H12.500 M4 14 H12.500 M4 18 H12.500" stroke="#3b3b3b" stroke-width="1.300"/></svg>
<div class="t" style="left:1639.8px;top:224px;font-size:17.2px;transform:scaleX(0.9213);color:#242424;">Papers</div>
<div class="b" style="left:1718.5px;top:136px;width:141.5px;height:32.5px;background:#fff;border:1px solid #9a9a9a;border-radius:6px;"></div>
<svg class="b" style="left:1722px;top:180px;" width="21" height="25" viewBox="0 0 21 25"><path d="M1.500 20 V3.500 a2.500 2.500 0 0 1 2.500 -2.500 H18.500 V19 H4 a2.500 2.500 0 0 0 0 4.500 H18.500" fill="none" stroke="#3b3b3b" stroke-width="1.500"/><circle cx="9" cy="8.500" r="3.500" fill="none" stroke="#2b78c8" stroke-width="1.600"/><path d="M11.500 11 L15.500 15.500" stroke="#2b78c8" stroke-width="1.600"/></svg>
<div class="t" style="left:1750.6px;top:185px;font-size:17.2px;transform:scaleX(0.9360);color:#242424;">Search</div>
<svg class="b" style="left:1721px;top:219.5px;" width="23" height="22" viewBox="0 0 23 22"><path d="M0.800 2 H21.500 M6.500 2 V20.500 M15 2 V17 C15 20 16.500 20.800 20.500 20.500" fill="none" stroke="#3b3b3b" stroke-width="1.600"/></svg>
<div class="t" style="left:1750.6px;top:224px;font-size:17.2px;transform:scaleX(0.9698);color:#242424;">E-Learning</div>
<svg class="b" style="left:1877px;top:141px;" width="45" height="44" viewBox="0 0 45 44"><g fill="none" stroke-width="1.700"><circle cx="30.500" cy="9.500" r="7.800" stroke="#3b3b3b"/><path d="M22.500 26 C23 20.500 27 18.500 30.500 18.500 C36.500 18.500 41.500 22 42 28.500" stroke="#3b3b3b"/><circle cx="13" cy="25.500" r="7.800" stroke="#2b88d8"/><path d="M1.200 43.500 C1.500 37.500 7 34.500 13 34.500 C19 34.500 24.500 37.500 24.800 43.500" stroke="#2b88d8"/></g></svg>
<div class="t" style="left:1866.5px;top:195px;font-size:17.2px;transform:scaleX(1.0741);color:#242424;">Support</div>
<svg class="b" style="left:1893.6px;top:222.75px;" width="8.8" height="5.7" viewBox="0 0 8.8 5.7"><path d="M1 1 L4.4 4.7 L7.8 1" fill="none" stroke="#2e2e2e" stroke-width="1.7" stroke-linecap="round" stroke-linejoin="round"/></svg>
<div class="t" style="left:1681.9px;top:255px;font-size:15.3px;transform:scaleX(0.9736);color:#3b3b3b;">Resource Center</div>
<svg class="b" style="left:1982px;top:141px;" width="48" height="47" viewBox="0 0 48 47"><rect x="1.500" y="1.500" width="41" height="5.500" fill="#c8c8c8" stroke="#3b3b3b" stroke-width="1.500"/><path d="M1.500 7 V41 H28 M15.500 7 V41 M29 7 V33 M42.500 7 V28" fill="none" stroke="#3b3b3b" stroke-width="1.700"/><path d="M22 35.500 H44.500 M36 26.500 L45 35.500 L36 44.500" fill="none" stroke="#2b88d8" stroke-width="1.700"/></svg>
<div class="t" style="left:1973.3px;top:195px;font-size:17.2px;transform:scaleX(1.0196);color:#242424;">Convert</div>
<div class="t" style="left:1971px;top:219px;font-size:17.2px;transform:scaleX(1.0586);color:#242424;">Model</div>
<svg class="b" style="left:2026.9px;top:222.75px;" width="8.8" height="5.7" viewBox="0 0 8.8 5.7"><path d="M1 1 L4.4 4.7 L7.8 1" fill="none" stroke="#2e2e2e" stroke-width="1.7" stroke-linecap="round" stroke-linejoin="round"/></svg>
<div class="t" style="left:1954.5px;top:255px;font-size:15.3px;transform:scaleX(1.0232);color:#3b3b3b;">Convert Model</div>
<svg class="b" style="left:2102.5px;top:138.5px;" width="49" height="49" viewBox="0 0 49 49"><circle cx="24.400" cy="24.200" r="23.900" fill="#0a9de2"/><path d="M19.630 13.500 H10.940 L24.890 37.760 L39.440 13.500 H31.360 L24.890 25.030 L20.850 18.960 M19.630 13.500 L10.340 28.870" fill="none" stroke="#fff" stroke-width="1.500" stroke-linejoin="miter"/></svg>
<div class="t" style="left:2099px;top:195px;font-size:17.2px;transform:scaleX(0.9445);color:#242424;">Related</div>
<div class="t" style="left:2083.8px;top:219px;font-size:17.2px;transform:scaleX(1.0166);color:#242424;">Software</div>
<svg class="b" style="left:2159.1px;top:222.75px;" width="8.8" height="5.7" viewBox="0 0 8.8 5.7"><path d="M1 1 L4.4 4.7 L7.8 1" fill="none" stroke="#2e2e2e" stroke-width="1.7" stroke-linecap="round" stroke-linejoin="round"/></svg>
<div class="t" style="left:2069.7px;top:255px;font-size:15.3px;color:#3b3b3b;">Related Software</div>
<svg class="b" style="left:2522.5px;top:252.05px;" width="14" height="8.5" viewBox="0 0 14 8.5"><path d="M1 1 L7 7.5 L13 1" fill="none" stroke="#333" stroke-width="1.6" stroke-linecap="round" stroke-linejoin="round"/></svg>
<div class="b" style="left:15.5px;top:290px;width:325px;height:34.5px;background:#fff;border:1px solid #dedede;border-radius:6px;"></div>
<div class="t" style="left:22.6px;top:300px;font-size:18.3px;transform:scaleX(0.9829);color:#242424;">E89</div>
<svg class="b" style="left:317.95px;top:304.75px;" width="14.5" height="8.5" viewBox="0 0 14.5 8.5"><path d="M1 1 L7.25 7.5 L13.5 1" fill="none" stroke="#333" stroke-width="1.6" stroke-linecap="round" stroke-linejoin="round"/></svg>
<div class="b" style="left:354.3px;top:301.5px;width:2.8px;height:2.6px;background:#444;border-radius:1.4px;"></div>
<div class="b" style="left:354.3px;top:307px;width:2.8px;height:2.6px;background:#444;border-radius:1.4px;"></div>
<div class="b" style="left:354.3px;top:312.5px;width:2.8px;height:2.6px;background:#444;border-radius:1.4px;"></div>
<div class="b" style="left:371.5px;top:290px;width:109px;height:34.5px;background:#fff;border:1px solid #dedede;border-radius:6px;"></div>
<svg class="b" style="left:380px;top:297.5px;" width="20" height="20" viewBox="0 0 20 20"><path d="M2 2 L18 18 M18 2 L2 18" stroke="#b0b0b0" stroke-width="1.500"/></svg>
<svg class="b" style="left:413px;top:297.5px;" width="26" height="20" viewBox="0 0 26 20"><path d="M2 11.500 L9 18 L24.500 2.500" fill="none" stroke="#b0b0b0" stroke-width="1.500"/></svg>
<div class="t" style="left:451.5px;top:294px;font-size:25px;transform:scaleX(1.0660);color:#2b2b2b;font-style:italic;font-family:'Liberation Serif',serif;-webkit-text-stroke:0.3px #2b2b2b;">f</div>
<div class="t" style="left:461.14px;top:298px;font-size:20px;transform:scaleX(1.3020);color:#2b2b2b;font-style:italic;font-family:'Liberation Serif',serif;-webkit-text-stroke:0.3px #2b2b2b;">x</div>
<div class="b" style="left:487.8px;top:290px;width:2062.2px;height:34.5px;background:#fff;border:1px solid #dedede;border-radius:6px;"></div>
<div class="t" style="left:504px;top:300px;font-size:18.3px;transform:scaleX(1.0558);color:#242424;">=VoseGammaProb10(C87:C94,2,3,TRUE)</div>
<svg class="b" style="left:2529.5px;top:301.75px;" width="14" height="8.5" viewBox="0 0 14 8.5"><path d="M1 1 L7 7.5 L13 1" fill="none" stroke="#333" stroke-width="1.6" stroke-linecap="round" stroke-linejoin="round"/></svg>
<div class="b" style="left:3px;top:339px;width:2529px;height:1119.5px;background:#fff;"></div>
<div class="b" style="left:3px;top:335px;width:2529px;height:32px;background:#f0f0f0;"></div>
<div class="b" style="left:53px;top:366.5px;width:2479px;height:1.2px;background:#9c9c9c;"></div>
<svg class="b" style="left:26px;top:340px;" width="24" height="24" viewBox="0 0 24 24"><path d="M23.500 0.500 V23.500 H0.500 Z" fill="#dcdcdc"/></svg>
<div class="b" style="left:856.3px;top:335px;width:203.4px;height:32px;background:#e1e1e1;border-left:1px solid #b4b4b4;border-right:1px solid #b4b4b4;"></div>
<div class="b" style="left:84px;top:341px;width:1px;height:25.5px;background:#d6d6d6;"></div>
<div class="b" style="left:403.1px;top:341px;width:1px;height:25.5px;background:#d6d6d6;"></div>
<div class="b" style="left:652.5px;top:341px;width:1px;height:25.5px;background:#d6d6d6;"></div>
<div class="b" style="left:855.5px;top:341px;width:1px;height:25.5px;background:#d6d6d6;"></div>
<div class="b" style="left:1059.2px;top:341px;width:1px;height:25.5px;background:#d6d6d6;"></div>
<div class="b" style="left:1261.8px;top:341px;width:1px;height:25.5px;background:#d6d6d6;"></div>
<div class="b" style="left:1464.9px;top:341px;width:1px;height:25.5px;background:#d6d6d6;"></div>
<div class="b" style="left:1668px;top:341px;width:1px;height:25.5px;background:#d6d6d6;"></div>
<div class="b" style="left:1871.1px;top:341px;width:1px;height:25.5px;background:#d6d6d6;"></div>
<div class="b" style="left:2073.7px;top:341px;width:1px;height:25.5px;background:#d6d6d6;"></div>
<div class="b" style="left:2276.9px;top:341px;width:1px;height:25.5px;background:#d6d6d6;"></div>
<div class="b" style="left:2479.5px;top:341px;width:1px;height:25.5px;background:#d6d6d6;"></div>
<div class="t" style="left:60.13px;top:340px;font-size:25.4px;color:#3a3a3a;">A</div>
<div class="t" style="left:235.53px;top:340px;font-size:25.4px;color:#3a3a3a;">B</div>
<div class="t" style="left:518.63px;top:340px;font-size:25.4px;color:#3a3a3a;">C</div>
<div class="t" style="left:744.83px;top:340px;font-size:25.4px;color:#3a3a3a;">D</div>
<div class="t" style="left:948.53px;top:340px;font-size:25.4px;color:#0e703c;-webkit-text-stroke:0.400px #0e703c;">E</div>
<div class="t" style="left:1151.24px;top:340px;font-size:25.4px;color:#3a3a3a;">F</div>
<div class="t" style="left:1353.92px;top:340px;font-size:25.4px;color:#3a3a3a;">G</div>
<div class="t" style="left:1557.53px;top:340px;font-size:25.4px;color:#3a3a3a;">H</div>
<div class="t" style="left:1765.77px;top:340px;font-size:25.4px;color:#3a3a3a;">I</div>
<div class="t" style="left:1966.65px;top:340px;font-size:25.4px;color:#3a3a3a;">J</div>
<div class="t" style="left:2167.03px;top:340px;font-size:25.4px;color:#3a3a3a;">K</div>
<div class="t" style="left:2370.94px;top:340px;font-size:25.4px;color:#3a3a3a;">L</div>
<div class="t" style="left:2501.92px;top:340px;font-size:25.4px;color:#3a3a3a;">M</div>
<div class="b" style="left:3px;top:366.5px;width:50px;height:1092px;background:#efefef;"></div>
<div class="b" style="left:52.5px;top:367.7px;width:1px;height:1090.8px;background:#c9c9c9;"></div>
<div class="b" style="left:3px;top:396.8px;width:50px;height:1px;background:#d9d9d9;"></div>
<div class="b" style="left:3px;top:429.8px;width:50px;height:1px;background:#d9d9d9;"></div>
<div class="b" style="left:3px;top:462.8px;width:50px;height:1px;background:#d9d9d9;"></div>
<div class="b" style="left:3px;top:495.8px;width:50px;height:1px;background:#d9d9d9;"></div>
<div class="b" style="left:3px;top:528.8px;width:50px;height:1px;background:#d9d9d9;"></div>
<div class="b" style="left:3px;top:561.8px;width:50px;height:1px;background:#d9d9d9;"></div>
<div class="b" style="left:3px;top:594.8px;width:50px;height:1px;background:#d9d9d9;"></div>
<div class="b" style="left:3px;top:627.8px;width:50px;height:1px;background:#d9d9d9;"></div>
<div class="b" style="left:3px;top:660.8px;width:50px;height:1px;background:#d9d9d9;"></div>
<div class="b" style="left:3px;top:693.8px;width:50px;height:1px;background:#d9d9d9;"></div>
<div class="b" style="left:3px;top:726.8px;width:50px;height:1px;background:#d9d9d9;"></div>
<div class="b" style="left:3px;top:759.8px;width:50px;height:1px;background:#d9d9d9;"></div>
<div class="b" style="left:3px;top:792.8px;width:50px;height:1px;background:#d9d9d9;"></div>
<div class="b" style="left:3px;top:825.8px;width:50px;height:1px;background:#d9d9d9;"></div>
<div class="b" style="left:3px;top:858.8px;width:50px;height:1px;background:#d9d9d9;"></div>
<div class="b" style="left:3px;top:891.8px;width:50px;height:1px;background:#d9d9d9;"></div>
<div class="b" style="left:3px;top:924.8px;width:50px;height:1px;background:#d9d9d9;"></div>
<div class="b" style="left:3px;top:957.8px;width:50px;height:1px;background:#d9d9d9;"></div>
<div class="b" style="left:3px;top:990.8px;width:50px;height:1px;background:#d9d9d9;"></div>
<div class="b" style="left:3px;top:1023.8px;width:50px;height:1px;background:#d9d9d9;"></div>
<div class="b" style="left:3px;top:1056.8px;width:50px;height:1px;background:#d9d9d9;"></div>
<div class="b" style="left:3px;top:1089.8px;width:50px;height:1px;background:#d9d9d9;"></div>
<div class="b" style="left:3px;top:1122.8px;width:50px;height:1px;background:#d9d9d9;"></div>
<div class="b" style="left:3px;top:1155.8px;width:50px;height:1px;background:#d9d9d9;"></div>
<div class="b" style="left:3px;top:1188.8px;width:50px;height:1px;background:#d9d9d9;"></div>
<div class="b" style="left:3px;top:1221.8px;width:50px;height:1px;background:#d9d9d9;"></div>
<div class="b" style="left:3px;top:1254.8px;width:50px;height:1px;background:#d9d9d9;"></div>
<div class="b" style="left:3px;top:1287.8px;width:50px;height:1px;background:#d9d9d9;"></div>
<div class="b" style="left:3px;top:1320.8px;width:50px;height:1px;background:#d9d9d9;"></div>
<div class="b" style="left:3px;top:1353.8px;width:50px;height:1px;background:#d9d9d9;"></div>
<div class="b" style="left:3px;top:1386.8px;width:50px;height:1px;background:#d9d9d9;"></div>
<div class="b" style="left:3px;top:1419.8px;width:50px;height:1px;background:#d9d9d9;"></div>
<div class="b" style="left:3px;top:1452.8px;width:50px;height:1px;background:#d9d9d9;"></div>
<div class="b" style="left:3px;top:991.8px;width:50px;height:32px;background:#e0e0e0;"></div>
<div class="b" style="left:50.5px;top:991.3px;width:3px;height:33px;background:#107c41;"></div>
<div class="t" style="left:15px;top:370px;font-size:25.4px;transform:scaleX(0.9311);color:#3a3a3a;">70</div>
<div class="t" style="left:15px;top:403px;font-size:25.4px;transform:scaleX(0.9311);color:#3a3a3a;">71</div>
<div class="t" style="left:15px;top:436px;font-size:25.4px;transform:scaleX(0.9311);color:#3a3a3a;">72</div>
<div class="t" style="left:15px;top:469px;font-size:25.4px;transform:scaleX(0.9311);color:#3a3a3a;">73</div>
<div class="t" style="left:15px;top:502px;font-size:25.4px;transform:scaleX(0.9311);color:#3a3a3a;">74</div>
<div class="t" style="left:15px;top:535px;font-size:25.4px;transform:scaleX(0.9311);color:#3a3a3a;">75</div>
<div class="t" style="left:15px;top:568px;font-size:25.4px;transform:scaleX(0.9311);color:#3a3a3a;">76</div>
<div class="t" style="left:15px;top:601px;font-size:25.4px;transform:scaleX(0.9311);color:#3a3a3a;">77</div>
<div class="t" style="left:15px;top:634px;font-size:25.4px;transform:scaleX(0.9311);color:#3a3a3a;">78</div>
<div class="t" style="left:15px;top:667px;font-size:25.4px;transform:scaleX(0.9311);color:#3a3a3a;">79</div>
<div class="t" style="left:15px;top:700px;font-size:25.4px;transform:scaleX(0.9311);color:#3a3a3a;">80</div>
<div class="t" style="left:15px;top:733px;font-size:25.4px;transform:scaleX(0.9311);color:#3a3a3a;">81</div>
<div class="t" style="left:15px;top:766px;font-size:25.4px;transform:scaleX(0.9311);color:#3a3a3a;">82</div>
<div class="t" style="left:15px;top:799px;font-size:25.4px;transform:scaleX(0.9311);color:#3a3a3a;">83</div>
<div class="t" style="left:15px;top:832px;font-size:25.4px;transform:scaleX(0.9311);color:#3a3a3a;">84</div>
<div class="t" style="left:15px;top:865px;font-size:25.4px;transform:scaleX(0.9311);color:#3a3a3a;">85</div>
<div class="t" style="left:15px;top:898px;font-size:25.4px;transform:scaleX(0.9311);color:#3a3a3a;">86</div>
<div class="t" style="left:15px;top:931px;font-size:25.4px;transform:scaleX(0.9311);color:#3a3a3a;">87</div>
<div class="t" style="left:15px;top:964px;font-size:25.4px;transform:scaleX(0.9311);color:#3a3a3a;">88</div>
<div class="t" style="left:15px;top:997px;font-size:25.4px;transform:scaleX(0.9311);color:#0e703c;">89</div>
<div class="t" style="left:15px;top:1030px;font-size:25.4px;transform:scaleX(0.9311);color:#3a3a3a;">90</div>
<div class="t" style="left:15px;top:1063px;font-size:25.4px;transform:scaleX(0.9311);color:#3a3a3a;">91</div>
<div class="t" style="left:15px;top:1096px;font-size:25.4px;transform:scaleX(0.9311);color:#3a3a3a;">92</div>
<div class="t" style="left:15px;top:1129px;font-size:25.4px;transform:scaleX(0.9311);color:#3a3a3a;">93</div>
<div class="t" style="left:15px;top:1162px;font-size:25.4px;transform:scaleX(0.9311);color:#3a3a3a;">94</div>
<div class="t" style="left:15px;top:1195px;font-size:25.4px;transform:scaleX(0.9311);color:#3a3a3a;">95</div>
<div class="t" style="left:15px;top:1228px;font-size:25.4px;transform:scaleX(0.9311);color:#3a3a3a;">96</div>
<div class="t" style="left:15px;top:1261px;font-size:25.4px;transform:scaleX(0.9311);color:#3a3a3a;">97</div>
<div class="t" style="left:15px;top:1294px;font-size:25.4px;transform:scaleX(0.9311);color:#3a3a3a;">98</div>
<div class="t" style="left:15px;top:1327px;font-size:25.4px;transform:scaleX(0.9311);color:#3a3a3a;">99</div>
<div class="t" style="left:8px;top:1360px;font-size:25.4px;transform:scaleX(0.9583);color:#3a3a3a;">100</div>
<div class="t" style="left:8px;top:1393px;font-size:25.4px;transform:scaleX(0.9583);color:#3a3a3a;">101</div>
<div class="t" style="left:8px;top:1426px;font-size:25.4px;transform:scaleX(0.9583);color:#3a3a3a;">102</div>
<div class="t" style="left:1314.8px;top:370px;font-size:25.4px;transform:scaleX(0.9628);color:#000;">915976651.1</div>
<div class="t" style="left:1314.8px;top:403px;font-size:25.4px;transform:scaleX(0.9736);color:#000;">39245639.93</div>
<div class="b" style="left:2531.7px;top:367px;width:1px;height:1091px;background:#e2e2e2;"></div>
<div class="b" style="left:2532px;top:335px;width:30px;height:1123.5px;background:#f0f0f0;"></div>
<div class="b" style="left:2535.4px;top:335.7px;width:30.6px;height:1127.3px;background:#f4f4f4;border-radius:13px;"></div>
<svg class="b" style="left:2541px;top:343px;" width="14" height="10" viewBox="0 0 14 10"><path d="M7 1 L13 8.500 H1 Z" fill="#6e6e6e"/></svg>
<svg class="b" style="left:2541px;top:1445px;" width="14" height="10" viewBox="0 0 14 10"><path d="M7 9 L13 1.500 H1 Z" fill="#6e6e6e"/></svg>
<div class="b" style="left:2541.5px;top:1088.5px;width:12px;height:334.5px;background:#6e6e6e;border-radius:6px;"></div>
<div class="b" style="left:3px;top:1458.5px;width:2559px;height:48px;background:#f0f0f0;"></div>
<div class="b" style="left:3px;top:1458px;width:2529px;height:1px;background:#e1e1e1;"></div>
<svg class="b" style="left:36px;top:1474px;" width="14" height="16" viewBox="0 0 14 16"><path d="M10.500 1.500 L3 8 L10.500 14.500" fill="none" stroke="#9a9a9a" stroke-width="1.600"/></svg>
<svg class="b" style="left:84px;top:1474px;" width="14" height="16" viewBox="0 0 14 16"><path d="M3.500 1.500 L11 8 L3.500 14.500" fill="none" stroke="#7a7a7a" stroke-width="1.600"/></svg>
<div class="b" style="left:168.5px;top:1459px;width:85.8px;height:42px;background:#fff;border-radius:0 0 6px 6px;box-shadow:0 1px 2px rgba(0,0,0,.25);"></div>
<div class="t" style="left:181.3px;top:1470px;font-size:20.5px;transform:scaleX(1.0870);color:#1c1c1c;-webkit-text-stroke:0.700px #1c1c1c;">Model</div>
<div class="b" style="left:181.3px;top:1493.6px;width:60.7px;height:3.2px;background:#107c41;"></div>
<div class="b" style="left:259.7px;top:1468.8px;width:1.2px;height:27.6px;background:#cfcfcf;"></div>
<div class="b" style="left:386.4px;top:1468.8px;width:1.2px;height:27.6px;background:#cfcfcf;"></div>
<div class="b" style="left:540.7px;top:1468.8px;width:1.2px;height:27.6px;background:#cfcfcf;"></div>
<div class="b" style="left:697.6px;top:1468.8px;width:1.2px;height:27.6px;background:#cfcfcf;"></div>
<div class="t" style="left:281px;top:1475px;font-size:20.3px;transform:scaleX(1.0053);color:#2b2b2b;">Summary</div>
<div class="t" style="left:405.7px;top:1475px;font-size:20.3px;transform:scaleX(0.9716);color:#2b2b2b;">1.1. Statistics</div>
<div class="t" style="left:561px;top:1475px;font-size:20.3px;transform:scaleX(0.9774);color:#2b2b2b;">2.1. Statistics</div>
<svg class="b" style="left:761px;top:1473px;" width="18" height="18" viewBox="0 0 18 18"><path d="M9 1 V17 M1 9 H17" stroke="#333" stroke-width="1.600"/></svg>
<div class="b" style="left:1542.5px;top:1475.9px;width:2.8px;height:2.8px;background:#444;border-radius:1.4px;"></div>
<div class="b" style="left:1542.5px;top:1481.6px;width:2.8px;height:2.8px;background:#444;border-radius:1.4px;"></div>
<div class="b" style="left:1542.5px;top:1487.3px;width:2.8px;height:2.8px;background:#444;border-radius:1.4px;"></div>
<div class="b" style="left:1568.5px;top:1469px;width:967px;height:26px;background:#f5f5f5;border-radius:13px;"></div>
<svg class="b" style="left:1575px;top:1475px;" width="12" height="14" viewBox="0 0 12 14"><path d="M1 7 L10.500 1 V13 Z" fill="#6e6e6e"/></svg>
<svg class="b" style="left:2516px;top:1475px;" width="12" height="14" viewBox="0 0 12 14"><path d="M11 7 L1.500 1 V13 Z" fill="#6e6e6e"/></svg>
<div class="b" style="left:1593.7px;top:1475.6px;width:644.7px;height:12.4px;background:#6e6e6e;border-radius:6.2px;"></div>
<div class="b" style="left:3px;top:1506.5px;width:2559px;height:33.5px;background:#f3f3f3;"></div>
<div class="t" style="left:19.2px;top:1517px;font-size:15.8px;transform:scaleX(0.9877);color:#3a3a3a;">Number of converted cells:0</div>
<div class="b" style="left:2118px;top:1507.5px;width:60px;height:32.5px;background:#e3e3e3;"></div>
<svg class="b" style="left:2136.5px;top:1513.5px;" width="22" height="20" viewBox="0 0 22 20"><g fill="none" stroke="#2b2b2b" stroke-width="1.500"><rect x="1" y="1" width="20" height="18"/><path d="M1 7 H21 M1 13 H21 M7.700 1 V19 M14.300 1 V19"/></g></svg>
<svg class="b" style="left:2196px;top:1513.5px;" width="24" height="20" viewBox="0 0 24 20"><g fill="none" stroke="#2b2b2b" stroke-width="1.500"><rect x="1" y="1" width="21.500" height="18"/><rect x="5.500" y="5" width="12.500" height="10.500"/><path d="M8 8.500 H15.500 M8 12 H15.500"/></g></svg>
<svg class="b" style="left:2256.5px;top:1513.5px;" width="24" height="20" viewBox="0 0 24 20"><g fill="none" stroke="#2b2b2b" stroke-width="1.500"><rect x="1" y="1" width="21.500" height="18"/><path d="M8 1 V11.500 H15.500 V1"/></g></svg>
<div class="b" style="left:2305.4px;top:1523.5px;width:12.6px;height:1.1px;background:#555;"></div>
<div class="b" style="left:2325px;top:1523.3px;width:149px;height:1.5px;background:#6a6a6a;"></div>
<div class="b" style="left:2399.5px;top:1519.5px;width:1.3px;height:9px;background:#6a6a6a;"></div>
<div class="b" style="left:2403.5px;top:1515px;width:8px;height:17.3px;background:#5a5a5a;border-radius:1px;"></div>
<svg class="b" style="left:2481px;top:1517.5px;" width="14" height="14" viewBox="0 0 14 14"><path d="M7 1 V13 M1 7 H13" stroke="#4a4a4a" stroke-width="1.400"/></svg>
<div class="t" style="left:2513.2px;top:1517px;font-size:15.8px;transform:scaleX(0.9526);color:#3a3a3a;">130%</div>
<div class="b" style="left:1300px;top:436.3px;width:85px;height:63.7px;background:#f0f0f0;border:2px solid #b9b7b3;border-radius:0 9px 0 0;"></div>
<div class="b" style="left:1353.5px;top:446.8px;width:29.5px;height:29.7px;background:#dcdcdc;"></div>
<svg class="b" style="left:1362px;top:455.5px;" width="12" height="12" viewBox="0 0 12 12"><path d="M2 2 L10 10 M10 2 L2 10" stroke="#f4f4f4" stroke-width="1.800"/></svg>
<div class="b dlg" style="left:79px;top:365px;width:1230px;height:934px;box-shadow:none;"><div class="b" style="left:0;top:0;width:1230px;height:934px;overflow:hidden;background:#f0f0f0;"><div class="b" style="left:0px;top:0px;width:1230px;height:44.8px;background:#2b579a;"></div>
<svg class="b" style="left:12.5px;top:14.5px;" width="25" height="25" viewBox="0 0 25 25"><circle cx="12.500" cy="12.500" r="11.600" fill="#fbfefe" stroke="#cfeae8" stroke-width="1"/><circle cx="12.500" cy="12.500" r="10" fill="none" stroke="#38a7a3" stroke-width="0.800"/><path d="M7.500 17.800 V8.800 L12.500 14.500 L17.500 8.800 V17.800 M8.800 17.800 V11.500 M16.200 17.800 V11.500 M6 7.500 L8 6 M19 7.500 L17 6" fill="none" stroke="#38a7a3" stroke-width="1"/></svg>
<div class="t" style="left:47.5px;top:21px;font-size:15.9px;transform:scaleX(0.8813);color:#aebcd6;">F(x)</div>
<div class="t" style="left:78.9px;top:21px;font-size:15.9px;transform:scaleX(1.0715);color:#aebcd6;">calculation</div>
<div class="b" style="left:1089.2px;top:19.3px;width:9px;height:3.4px;background:#c9d0dc;"></div>
<div class="b" style="left:1141.8px;top:11px;width:13.4px;height:13px;border:1.500px solid #c9d0dc;border-top-width:3.300px;"></div>
<svg class="b" style="left:1195.6px;top:10.6px;" width="14" height="14" viewBox="0 0 14 14"><path d="M1.500 1.500 L12.500 12.500 M12.500 1.500 L1.500 12.500" stroke="#c9d0dc" stroke-width="2"/></svg>
<div class="t" style="left:79.6px;top:71px;font-size:16px;transform:scaleX(0.9772);color:#000;">Distribution :</div>
<div class="b" style="left:171.3px;top:63.5px;width:235.4px;height:27px;background:#fff;border:1px solid #dedede;"></div>
<div class="t" style="left:175.6px;top:70px;font-size:16px;transform:scaleX(0.9787);color:#000;">Gamma</div>
<svg class="b" style="left:386.5px;top:74.5px;" width="9" height="6" viewBox="0 0 9 6"><path d="M0.500 0.500 H8.500 L4.500 5.500 Z" fill="#111"/></svg>
<div class="b" style="left:18.4px;top:110.4px;width:406.2px;height:273.6px;border:1px solid #dcdcdc;border-radius:3px;"></div>
<div class="b" style="left:29.2px;top:108.4px;width:90.8px;height:5px;background:#f0f0f0;"></div>
<div class="t" style="left:33.2px;top:103px;font-size:16px;transform:scaleX(0.9891);color:#000;-webkit-text-stroke:0.350px #000;">Parameters</div>
<div class="t" style="left:121.3px;top:133px;font-size:16px;transform:scaleX(0.9679);color:#000;">alpha:</div>
<div class="b" style="left:171.4px;top:128.4px;width:197.4px;height:29.1px;background:#fff;border:1px solid #e2e2e2;"></div>
<div class="t" style="left:174.4px;top:134px;font-size:16px;color:#000;">2</div>
<div class="b" style="left:371px;top:128.4px;width:35.8px;height:29.1px;background:#f7f7f7;border:1px solid #6b6b6b;"></div>
<svg class="b" style="left:376.9px;top:133.75px;" width="24" height="18" viewBox="0 0 24 18"><rect x="0" y="0.500" width="9" height="7.300" fill="#4a80c2"/><path d="M0.500 4.800 H7" stroke="#9ab4d6" stroke-width="1"/><rect x="9" y="1.200" width="8.300" height="10" fill="#fff"/><g stroke="#c4c4c4" stroke-width="1" fill="none"><path d="M9 1 H24 M16.500 6.800 H24 M0 11.700 H24 M0 17.400 H24 M8.300 7.800 V17.400 M17.300 1 V12"/></g><path d="M16.800 3.400 L12.300 7.300" stroke="#f7931e" stroke-width="1.500"/><path d="M10.300 9.300 L10.800 5.300 L14.600 9 Z" fill="#f7931e"/><rect x="16.700" y="12" width="7.300" height="5" fill="#4a80c2"/></svg>
<div class="t" style="left:128.5px;top:168px;font-size:16px;transform:scaleX(0.9836);color:#000;">beta:</div>
<div class="b" style="left:171.4px;top:163.3px;width:197.4px;height:29.1px;background:#fff;border:1px solid #e2e2e2;"></div>
<div class="t" style="left:174.6px;top:169px;font-size:16px;color:#000;">3</div>
<div class="b" style="left:371px;top:163.3px;width:35.8px;height:29.1px;background:#f7f7f7;border:1px solid #6b6b6b;"></div>
<svg class="b" style="left:376.9px;top:168.65px;" width="24" height="18" viewBox="0 0 24 18"><rect x="0" y="0.500" width="9" height="7.300" fill="#4a80c2"/><path d="M0.500 4.800 H7" stroke="#9ab4d6" stroke-width="1"/><rect x="9" y="1.200" width="8.300" height="10" fill="#fff"/><g stroke="#c4c4c4" stroke-width="1" fill="none"><path d="M9 1 H24 M16.500 6.800 H24 M0 11.700 H24 M0 17.400 H24 M8.300 7.800 V17.400 M17.300 1 V12"/></g><path d="M16.800 3.400 L12.300 7.300" stroke="#f7931e" stroke-width="1.500"/><path d="M10.300 9.300 L10.800 5.300 L14.600 9 Z" fill="#f7931e"/><rect x="16.700" y="12" width="7.300" height="5" fill="#4a80c2"/></svg>
<div class="t" style="left:39.4px;top:406px;font-size:16px;transform:scaleX(0.9906);color:#000;">Shift Distribution :</div>
<div class="b" style="left:171.4px;top:400.3px;width:197.4px;height:29.6px;background:#fff;border:1px solid #e2e2e2;"></div>
<div class="b" style="left:371px;top:400.3px;width:35.8px;height:29.6px;background:#f7f7f7;border:1px solid #6b6b6b;"></div>
<svg class="b" style="left:376.9px;top:405.9px;" width="24" height="18" viewBox="0 0 24 18"><rect x="0" y="0.500" width="9" height="7.300" fill="#4a80c2"/><path d="M0.500 4.800 H7" stroke="#9ab4d6" stroke-width="1"/><rect x="9" y="1.200" width="8.300" height="10" fill="#fff"/><g stroke="#c4c4c4" stroke-width="1" fill="none"><path d="M9 1 H24 M16.500 6.800 H24 M0 11.700 H24 M0 17.400 H24 M8.300 7.800 V17.400 M17.300 1 V12"/></g><path d="M16.800 3.400 L12.300 7.300" stroke="#f7931e" stroke-width="1.500"/><path d="M10.300 9.300 L10.800 5.300 L14.600 9 Z" fill="#f7931e"/><rect x="16.700" y="12" width="7.300" height="5" fill="#4a80c2"/></svg>
<div class="b" style="left:18.4px;top:445.5px;width:406.2px;height:182px;border:1px solid #dcdcdc;border-radius:3px;"></div>
<div class="b" style="left:29.5px;top:443.5px;width:63.3px;height:5px;background:#f0f0f0;"></div>
<div class="t" style="left:33.5px;top:438px;font-size:16px;color:#000;-webkit-text-stroke:0.350px #000;">Bounds</div>
<div class="b" style="left:50px;top:488.1px;width:17.8px;height:17.8px;background:#fff;border:1px solid #333;border-radius:9px;"></div>
<div class="t" style="left:72.3px;top:490px;font-size:16px;color:#000;">X bounds</div>
<div class="b" style="left:50px;top:568.1px;width:17.8px;height:17.8px;background:#fff;border:1px solid #333;border-radius:9px;"></div>
<div class="t" style="left:72.3px;top:570px;font-size:16px;transform:scaleX(0.9832);color:#000;">P bounds</div>
<div class="t" style="left:189.9px;top:473px;font-size:16px;transform:scaleX(0.9615);color:#000;">Xmin :</div>
<div class="b" style="left:241.2px;top:470.6px;width:127.6px;height:29px;background:#fff;border:1px solid #e2e2e2;"></div>
<div class="b" style="left:371px;top:470.6px;width:35.8px;height:29px;background:#f7f7f7;border:1px solid #6b6b6b;"></div>
<svg class="b" style="left:376.9px;top:475.9px;" width="24" height="18" viewBox="0 0 24 18"><rect x="0" y="0.500" width="9" height="7.300" fill="#4a80c2"/><path d="M0.500 4.800 H7" stroke="#9ab4d6" stroke-width="1"/><rect x="9" y="1.200" width="8.300" height="10" fill="#fff"/><g stroke="#c4c4c4" stroke-width="1" fill="none"><path d="M9 1 H24 M16.500 6.800 H24 M0 11.700 H24 M0 17.400 H24 M8.300 7.800 V17.400 M17.300 1 V12"/></g><path d="M16.800 3.400 L12.300 7.300" stroke="#f7931e" stroke-width="1.500"/><path d="M10.300 9.300 L10.800 5.300 L14.600 9 Z" fill="#f7931e"/><rect x="16.700" y="12" width="7.300" height="5" fill="#4a80c2"/></svg>
<div class="t" style="left:186.2px;top:513px;font-size:16px;transform:scaleX(0.9500);color:#000;">Xmax :</div>
<div class="b" style="left:241.2px;top:505.5px;width:127.6px;height:29.1px;background:#fff;border:1px solid #e2e2e2;"></div>
<div class="b" style="left:371px;top:505.5px;width:35.8px;height:29.1px;background:#f7f7f7;border:1px solid #6b6b6b;"></div>
<svg class="b" style="left:376.9px;top:510.85px;" width="24" height="18" viewBox="0 0 24 18"><rect x="0" y="0.500" width="9" height="7.300" fill="#4a80c2"/><path d="M0.500 4.800 H7" stroke="#9ab4d6" stroke-width="1"/><rect x="9" y="1.200" width="8.300" height="10" fill="#fff"/><g stroke="#c4c4c4" stroke-width="1" fill="none"><path d="M9 1 H24 M16.500 6.800 H24 M0 11.700 H24 M0 17.400 H24 M8.300 7.800 V17.400 M17.300 1 V12"/></g><path d="M16.800 3.400 L12.300 7.300" stroke="#f7931e" stroke-width="1.500"/><path d="M10.300 9.300 L10.800 5.300 L14.600 9 Z" fill="#f7931e"/><rect x="16.700" y="12" width="7.300" height="5" fill="#4a80c2"/></svg>
<div class="t" style="left:191.3px;top:558px;font-size:16px;transform:scaleX(0.9307);color:#000;">Pmin :</div>
<div class="b" style="left:241.2px;top:550.4px;width:127.6px;height:29px;background:#fff;border:1px solid #e2e2e2;"></div>
<div class="b" style="left:371px;top:550.4px;width:35.8px;height:29px;background:#f7f7f7;border:1px solid #6b6b6b;"></div>
<svg class="b" style="left:376.9px;top:555.7px;" width="24" height="18" viewBox="0 0 24 18"><rect x="0" y="0.500" width="9" height="7.300" fill="#4a80c2"/><path d="M0.500 4.800 H7" stroke="#9ab4d6" stroke-width="1"/><rect x="9" y="1.200" width="8.300" height="10" fill="#fff"/><g stroke="#c4c4c4" stroke-width="1" fill="none"><path d="M9 1 H24 M16.500 6.800 H24 M0 11.700 H24 M0 17.400 H24 M8.300 7.800 V17.400 M17.300 1 V12"/></g><path d="M16.800 3.400 L12.300 7.300" stroke="#f7931e" stroke-width="1.500"/><path d="M10.300 9.300 L10.800 5.300 L14.600 9 Z" fill="#f7931e"/><rect x="16.700" y="12" width="7.300" height="5" fill="#4a80c2"/></svg>
<div class="t" style="left:187.4px;top:591px;font-size:16px;transform:scaleX(0.9259);color:#000;">Pmax :</div>
<div class="b" style="left:241.2px;top:585.4px;width:127.6px;height:29.2px;background:#fff;border:1px solid #e2e2e2;"></div>
<div class="b" style="left:371px;top:585.4px;width:35.8px;height:29.2px;background:#f7f7f7;border:1px solid #6b6b6b;"></div>
<svg class="b" style="left:376.9px;top:590.8px;" width="24" height="18" viewBox="0 0 24 18"><rect x="0" y="0.500" width="9" height="7.300" fill="#4a80c2"/><path d="M0.500 4.800 H7" stroke="#9ab4d6" stroke-width="1"/><rect x="9" y="1.200" width="8.300" height="10" fill="#fff"/><g stroke="#c4c4c4" stroke-width="1" fill="none"><path d="M9 1 H24 M16.500 6.800 H24 M0 11.700 H24 M0 17.400 H24 M8.300 7.800 V17.400 M17.300 1 V12"/></g><path d="M16.800 3.400 L12.300 7.300" stroke="#f7931e" stroke-width="1.500"/><path d="M10.300 9.300 L10.800 5.300 L14.600 9 Z" fill="#f7931e"/><rect x="16.700" y="12" width="7.300" height="5" fill="#4a80c2"/></svg>
<div class="t" style="left:99.7px;top:646px;font-size:16px;transform:scaleX(0.9425);color:#000;">x values :</div>
<div class="b" style="left:171.4px;top:640.4px;width:197.4px;height:28.8px;background:#fff;border:1px solid #d8d8d8;"></div>
<div class="b" style="left:173px;top:642px;width:194px;height:26px;background:#5fe8f8;overflow:hidden;"><div class="t" style="left:0.500px;top:4px;font-size:16px;">{3.81491663550956;3.63897002497304</div></div>
<div class="b" style="left:371px;top:640.4px;width:35.8px;height:28.8px;background:#f7f7f7;border:1px solid #6b6b6b;"></div>
<svg class="b" style="left:376.9px;top:645.6px;" width="24" height="18" viewBox="0 0 24 18"><rect x="0" y="0.500" width="9" height="7.300" fill="#4a80c2"/><path d="M0.500 4.800 H7" stroke="#9ab4d6" stroke-width="1"/><rect x="9" y="1.200" width="8.300" height="10" fill="#fff"/><g stroke="#c4c4c4" stroke-width="1" fill="none"><path d="M9 1 H24 M16.500 6.800 H24 M0 11.700 H24 M0 17.400 H24 M8.300 7.800 V17.400 M17.300 1 V12"/></g><path d="M16.800 3.400 L12.300 7.300" stroke="#f7931e" stroke-width="1.500"/><path d="M10.300 9.300 L10.800 5.300 L14.600 9 Z" fill="#f7931e"/><rect x="16.700" y="12" width="7.300" height="5" fill="#4a80c2"/></svg>
<div class="t" style="left:110.3px;top:686px;font-size:16px;transform:scaleX(0.9790);color:#000;">Result :</div>
<div class="b" style="left:171.4px;top:678.7px;width:235.4px;height:28.7px;background:#f0f0f0;border:1px solid #dadada;"></div>
<div class="t" style="left:202px;top:684px;font-size:16px;transform:scaleX(0.9926);color:#000;">-3.18815</div>
<div class="t" style="left:335.4px;top:722px;font-size:16px;transform:scaleX(0.9787);color:#000;">Log 10</div>
<div class="b" style="left:388.5px;top:720.2px;width:17.5px;height:17.3px;background:#fff;border:1px solid #8a8a8a;"></div>
<svg class="b" style="left:390.5px;top:722.5px;" width="14" height="13" viewBox="0 0 14 13"><path d="M2.500 6.500 L5.800 10 L11.800 2.500" fill="none" stroke="#8a8a8a" stroke-width="1.700"/></svg>
<div class="b" style="left:18.4px;top:758.3px;width:406.4px;height:99.1px;border:1px solid #dcdcdc;border-radius:3px;"></div>
<div class="b" style="left:29.7px;top:756.3px;width:51px;height:5px;background:#f0f0f0;"></div>
<div class="t" style="left:33.7px;top:751px;font-size:16px;transform:scaleX(0.9644);color:#000;-webkit-text-stroke:0.350px #000;">Errors</div>
<div class="t" style="left:40.3px;top:883px;font-size:16px;color:#000;">Output Location :</div>
<div class="b" style="left:171.4px;top:878.8px;width:215.2px;height:28.5px;background:#fff;border:1px solid #e2e2e2;"></div>
<div class="b" style="left:173px;top:880px;width:210.3px;height:26px;overflow:hidden;"><div class="t" style="left:0.800px;top:4px;font-size:16px;transform:scaleX(0.9496);">='[NPV - two scenarios.xlsx]Model'!$E$89</div></div>
<div class="b" style="left:389.3px;top:878.3px;width:35.5px;height:29.5px;background:#f7f7f7;border:1px solid #6b6b6b;"></div>
<svg class="b" style="left:395.05px;top:883.85px;" width="24" height="18" viewBox="0 0 24 18"><rect x="0" y="0.500" width="9" height="7.300" fill="#4a80c2"/><path d="M0.500 4.800 H7" stroke="#9ab4d6" stroke-width="1"/><rect x="9" y="1.200" width="8.300" height="10" fill="#fff"/><g stroke="#c4c4c4" stroke-width="1" fill="none"><path d="M9 1 H24 M16.500 6.800 H24 M0 11.700 H24 M0 17.400 H24 M8.300 7.800 V17.400 M17.300 1 V12"/></g><path d="M16.800 3.400 L12.300 7.300" stroke="#f7931e" stroke-width="1.500"/><path d="M10.300 9.300 L10.800 5.300 L14.600 9 Z" fill="#f7931e"/><rect x="16.700" y="12" width="7.300" height="5" fill="#4a80c2"/></svg>
<div class="b" style="left:441.3px;top:64.3px;width:771.4px;height:41.2px;background:#fff;border:1px solid #a9a798;border-bottom:none;"></div>
<svg class="b" style="left:449.5px;top:73.5px;" width="20" height="20" viewBox="0 0 20 20"><path d="M1.700 15.500 V1.700 H14.500" fill="none" stroke="#5b93cc" stroke-width="1.500"/><rect x="6.300" y="4.500" width="12" height="13.600" fill="none" stroke="#1b1b1b" stroke-width="1.700"/></svg>
<svg class="b" style="left:488.5px;top:73px;" width="23" height="22" viewBox="0 0 23 22"><path d="M5.500 8.500 V1.800 H15 L17 3.800 V8.500" fill="none" stroke="#5b93cc" stroke-width="1.500"/><path d="M1.500 16.200 V8.800 H21 V16.200 H17.500 V13.300 H5 V16.200 Z" fill="none" stroke="#1b1b1b" stroke-width="1.700"/><path d="M5 16.500 V20.300 H17.500 V16.500" fill="none" stroke="#5b93cc" stroke-width="1.500"/></svg>
<div class="b" style="left:525px;top:67.3px;width:1.2px;height:33.2px;background:#5c5c5c;"></div>
<svg class="b" style="left:539.5px;top:73px;" width="24" height="24" viewBox="0 0 24 24"><circle cx="10.300" cy="10.500" r="8.700" fill="none" stroke="#2b2b2b" stroke-width="1.600"/><path d="M16.800 17 L21.800 22" stroke="#2b2b2b" stroke-width="1.800"/><path d="M7.300 7.800 V13.500 M10.400 6 V13.500 M13.400 9 V13.500" stroke="#5b93cc" stroke-width="1.400"/></svg>
<svg class="b" style="left:580px;top:74px;" width="22" height="24" viewBox="0 0 22 24"><path d="M4.800 2 H1.800 V17.500 H4.800 M16.800 2 H19.800 V17.500 H16.800" fill="none" stroke="#1b1b1b" stroke-width="1.700"/><path d="M7.300 6.500 L14.300 13.500 M14.300 6.500 L7.300 13.500" stroke="#5b93cc" stroke-width="1.700"/><path d="M1 22 H18" stroke="#5b93cc" stroke-width="1.300"/><path d="M16 19.800 L20.500 22 L16 24.200 Z" fill="#5b93cc"/></svg>
<div class="b" style="left:441.3px;top:105px;width:771.4px;height:752.7px;background:#fff;border:1px solid #9f9f9f;"></div>
<div class="b" style="left:493px;top:135px;width:689.3px;height:22px;overflow:hidden;"><div class="t" style="left:1.500px;top:5px;font-size:16px;transform:scaleX(1.0070);color:#111;">GammaProb10({3.81491663550956;3.63897002497304;3.83041340279219;7.0863765301277;5.37</div></div>
<svg class="b" style="left:490.4px;top:157.5px;" width="694.1" height="679.2" viewBox="0 0 694.1 679.2"><rect x="2.500" y="2.500" width="690.1" height="667.2" fill="#fff" stroke="#a3a3a3" stroke-width="1.100"/><g fill="none" stroke="#fc0000" stroke-width="1" shape-rendering="crispEdges"><path d="M52.11 669.2 V565.9 H2.3" /><path d="M86.32 669.2 V452.25 H2.3" /><path d="M90.37 669.2 V438.86 H2.3" /><path d="M90.71 669.2 V437.73 H2.3" /><path d="M103.7 669.2 V394.99 H2.3" /><path d="M125.87 669.2 V330.06 H2.3" /><path d="M130.7 669.2 V317.58 H2.3" /><path d="M165.54 669.2 V235.29 H2.3" /></g><polyline points="2.3,669.5 4.6,669.15 6.9,668.15 9.19,666.52 11.49,664.32 13.79,661.59 16.09,658.36 18.39,654.66 20.68,650.53 22.98,646.01 25.28,641.12 27.58,635.89 29.88,630.35 32.17,624.53 34.47,618.45 36.77,612.13 39.07,605.6 41.37,598.87 43.66,591.97 45.96,584.92 48.26,577.72 50.56,570.41 52.86,562.99 55.15,555.48 57.45,547.89 59.75,540.24 62.05,532.54 64.35,524.8 66.64,517.03 68.94,509.24 71.24,501.44 73.54,493.65 75.84,485.86 78.13,478.08 80.43,470.33 82.73,462.61 85.03,454.93 87.33,447.29 89.62,439.7 91.92,432.16 94.22,424.68 96.52,417.26 98.82,409.91 101.11,402.62 103.41,395.41 105.71,388.28 108.01,381.22 110.31,374.25 112.6,367.36 114.9,360.55 117.2,353.83 119.5,347.2 121.8,340.67 124.09,334.22 126.39,327.86 128.69,321.6 130.99,315.44 133.29,309.36 135.58,303.39 137.88,297.51 140.18,291.72 142.48,286.03 144.78,280.43 147.07,274.94 149.37,269.53 151.67,264.22 153.97,259.01 156.27,253.89 158.56,248.86 160.86,243.92 163.16,239.08 165.46,234.33 167.76,229.67 170.05,225.1 172.35,220.62 174.65,216.22 176.95,211.91 179.25,207.69 181.54,203.56 183.84,199.5 186.14,195.54 188.44,191.65 190.74,187.84 193.03,184.11 195.33,180.47 197.63,176.89 199.93,173.4 202.23,169.98 204.52,166.63 206.82,163.36 209.12,160.16 211.42,157.03 213.72,153.96 216.01,150.97 218.31,148.04 220.61,145.18 222.91,142.38 225.21,139.65 227.5,136.98 229.8,134.37 232.1,131.82 234.4,129.33 236.7,126.89 238.99,124.51 241.29,122.19 243.59,119.92 245.89,117.71 248.19,115.55 250.48,113.44 252.78,111.38 255.08,109.37 257.38,107.4 259.68,105.49 261.97,103.62 264.27,101.79 266.57,100.01 268.87,98.28 271.17,96.58 273.46,94.93 275.76,93.32 278.06,91.74 280.36,90.21 282.66,88.71 284.95,87.26 287.25,85.83 289.55,84.45 291.85,83.09 294.15,81.77 296.44,80.49 298.74,79.24 301.04,78.02 303.34,76.83 305.64,75.67 307.93,74.53 310.23,73.43 312.53,72.36 314.83,71.31 317.13,70.29 319.42,69.3 321.72,68.33 324.02,67.39 326.32,66.47 328.62,65.58 330.91,64.71 333.21,63.86 335.51,63.03 337.81,62.23 340.11,61.44 342.4,60.68 344.7,59.94 347,59.21 349.3,58.51 351.6,57.82 353.89,57.15 356.19,56.5 358.49,55.87 360.79,55.25 363.09,54.65 365.38,54.07 367.68,53.5 369.98,52.95 372.28,52.41 374.58,51.88 376.87,51.37 379.17,50.88 381.47,50.39 383.77,49.92 386.07,49.47 388.36,49.02 390.66,48.59 392.96,48.17 395.26,47.76 397.56,47.36 399.85,46.97 402.15,46.59 404.45,46.23 406.75,45.87 409.05,45.52 411.34,45.18 413.64,44.86 415.94,44.54 418.24,44.22 420.54,43.92 422.83,43.63 425.13,43.34 427.43,43.06 429.73,42.79 432.03,42.53 434.32,42.27 436.62,42.03 438.92,41.78 441.22,41.55 443.52,41.32 445.81,41.1 448.11,40.88 450.41,40.67 452.71,40.47 455.01,40.27 457.3,40.08 459.6,39.89 461.9,39.71 464.2,39.53 466.5,39.36 468.79,39.19 471.09,39.03 473.39,38.87 475.69,38.71 477.99,38.56 480.28,38.42 482.58,38.28 484.88,38.14 487.18,38.01 489.48,37.88 491.77,37.75 494.07,37.63 496.37,37.51 498.67,37.39 500.97,37.28 503.26,37.17 505.56,37.07 507.86,36.96 510.16,36.86 512.46,36.77 514.75,36.67 517.05,36.58 519.35,36.49 521.65,36.4 523.95,36.32 526.24,36.24 528.54,36.16 530.84,36.08 533.14,36.01 535.44,35.93 537.73,35.86 540.03,35.79 542.33,35.73 544.63,35.66 546.93,35.6 549.22,35.54 551.52,35.48 553.82,35.42 556.12,35.36 558.42,35.31 560.71,35.26 563.01,35.21 565.31,35.16 567.61,35.11 569.91,35.06 572.2,35.01 574.5,34.97 576.8,34.93 579.1,34.88 581.4,34.84 583.69,34.8 585.99,34.77 588.29,34.73 590.59,34.69 592.89,34.66 595.18,34.62 597.48,34.59 599.78,34.56 602.08,34.53 604.38,34.5 606.67,34.47 608.97,34.44 611.27,34.41 613.57,34.38 615.87,34.36 618.16,34.33 620.46,34.31 622.76,34.28 625.06,34.26 627.36,34.24 629.65,34.22 631.95,34.2 634.25,34.18 636.55,34.16 638.85,34.14 641.14,34.12 643.44,34.1 645.74,34.08 648.04,34.06 650.34,34.05 652.63,34.03 654.93,34.02 657.23,34 659.53,33.99 661.83,33.97 664.12,33.96 666.42,33.94 668.72,33.93 671.02,33.92 673.32,33.9 675.61,33.89 677.91,33.88 680.21,33.87 682.51,33.86 684.81,33.85 687.1,33.84 689.4,33.83 691.7,33.82" fill="none" stroke="#4682b4" stroke-width="2.200" stroke-linejoin="round"/><g stroke="#9a9a9a" stroke-width="1"><path d="M-3.2 606.4 H2.3"/><path d="M-3.2 542.8 H2.3"/><path d="M-3.2 479.2 H2.3"/><path d="M-3.2 415.6 H2.3"/><path d="M-3.2 352 H2.3"/><path d="M-3.2 288.4 H2.3"/><path d="M-3.2 224.8 H2.3"/><path d="M-3.2 161.2 H2.3"/><path d="M-3.2 97.6 H2.3"/><path d="M-3.2 34 H2.3"/><path d="M117.2 669.2 V673.7"/><path d="M232.1 669.2 V673.7"/><path d="M347 669.2 V673.7"/><path d="M461.9 669.2 V673.7"/><path d="M576.8 669.2 V673.7"/><path d="M691.7 669.2 V673.7"/></g></svg>
<div class="t" style="left:451.8px;top:820px;font-size:16px;transform:scaleX(0.9635);color:#111;">0.00</div>
<div class="t" style="left:451.8px;top:756px;font-size:16px;transform:scaleX(0.9635);color:#111;">0.10</div>
<div class="t" style="left:451.8px;top:693px;font-size:16px;transform:scaleX(0.9635);color:#111;">0.20</div>
<div class="t" style="left:451.8px;top:629px;font-size:16px;transform:scaleX(0.9635);color:#111;">0.30</div>
<div class="t" style="left:451.8px;top:566px;font-size:16px;transform:scaleX(0.9635);color:#111;">0.40</div>
<div class="t" style="left:451.8px;top:502px;font-size:16px;transform:scaleX(0.9635);color:#111;">0.50</div>
<div class="t" style="left:451.8px;top:438px;font-size:16px;transform:scaleX(0.9635);color:#111;">0.60</div>
<div class="t" style="left:451.8px;top:375px;font-size:16px;transform:scaleX(0.9635);color:#111;">0.70</div>
<div class="t" style="left:451.8px;top:311px;font-size:16px;transform:scaleX(0.9635);color:#111;">0.80</div>
<div class="t" style="left:451.8px;top:248px;font-size:16px;transform:scaleX(0.9635);color:#111;">0.90</div>
<div class="t" style="left:451.8px;top:184px;font-size:16px;transform:scaleX(0.9635);color:#111;">1.00</div>
<div class="t" style="left:477.33px;top:836px;font-size:16px;color:#111;">0.00</div>
<div class="t" style="left:592.23px;top:836px;font-size:16px;color:#111;">5.00</div>
<div class="t" style="left:702.68px;top:836px;font-size:16px;color:#111;">10.00</div>
<div class="t" style="left:817.58px;top:836px;font-size:16px;color:#111;">15.00</div>
<div class="t" style="left:932.48px;top:836px;font-size:16px;color:#111;">20.00</div>
<div class="t" style="left:1047.38px;top:836px;font-size:16px;color:#111;">25.00</div>
<div class="t" style="left:1162.28px;top:836px;font-size:16px;color:#111;">30.00</div>
<div class="b" style="left:808px;top:875.2px;width:114.5px;height:34.6px;background:#f3f3f3;border:1px solid #6b6b6b;"></div>
<div class="t" style="left:863.2px;top:884px;font-size:16.3px;transform:scaleX(0.9663);color:#000;">Help</div>
<svg class="b" style="left:817px;top:882.5px;" width="21" height="21" viewBox="0 0 21 21"><circle cx="10.500" cy="10.500" r="10.200" fill="#4a86c5"/><path d="M7 8 C7.200 3.500 14.200 3.800 14 8 C13.800 10.800 10.600 10.800 10.600 13.500" fill="none" stroke="#fff" stroke-width="2.300"/><circle cx="10.600" cy="16.700" r="1.400" fill="#fff"/></svg>
<div class="b" style="left:925px;top:875.2px;width:170.5px;height:34.6px;background:#f3f3f3;border:1px solid #6b6b6b;"></div>
<div class="t" style="left:940.7px;top:884px;font-size:16.3px;transform:scaleX(0.9849);color:#000;">Insert to Worksheet</div>
<div class="b" style="left:1098.3px;top:875.2px;width:114.3px;height:34.6px;background:#f3f3f3;border:1px solid #6b6b6b;"></div>
<div class="t" style="left:1131px;top:884px;font-size:16.3px;transform:scaleX(0.9657);color:#000;">Cancel</div></div><div class="b" style="left:0;top:0;width:1230px;height:934px;border:1.300px solid #6f6f6f;box-sizing:border-box;"></div></div>
<div class="b dlg" style="left:1250px;top:481px;width:1230px;height:934px;box-shadow:1px 2px 6px rgba(30,50,90,.280);"><div class="b" style="left:0;top:0;width:1230px;height:934px;overflow:hidden;background:#f0f0f0;"><div class="b" style="left:0px;top:0px;width:1230px;height:44.8px;background:#2b579a;"></div>
<svg class="b" style="left:12.5px;top:14.5px;" width="25" height="25" viewBox="0 0 25 25"><circle cx="12.500" cy="12.500" r="11.600" fill="#fbfefe" stroke="#cfeae8" stroke-width="1"/><circle cx="12.500" cy="12.500" r="10" fill="none" stroke="#38a7a3" stroke-width="0.800"/><path d="M7.500 17.800 V8.800 L12.500 14.500 L17.500 8.800 V17.800 M8.800 17.800 V11.500 M16.200 17.800 V11.500 M6 7.500 L8 6 M19 7.500 L17 6" fill="none" stroke="#38a7a3" stroke-width="1"/></svg>
<div class="t" style="left:47.2px;top:21px;font-size:15.9px;transform:scaleX(0.9713);color:#e4e9f2;">f(x)</div>
<div class="t" style="left:76px;top:21px;font-size:15.9px;transform:scaleX(1.0728);color:#e4e9f2;">calculation</div>
<div class="b" style="left:1089.2px;top:19.3px;width:9px;height:3.4px;background:#fff;"></div>
<div class="b" style="left:1141.8px;top:11px;width:13.4px;height:13px;border:1.500px solid #fff;border-top-width:3.300px;"></div>
<svg class="b" style="left:1195.6px;top:10.6px;" width="14" height="14" viewBox="0 0 14 14"><path d="M1.500 1.500 L12.500 12.500 M12.500 1.500 L1.500 12.500" stroke="#fff" stroke-width="2"/></svg>
<div class="t" style="left:79.6px;top:71px;font-size:16px;transform:scaleX(0.9772);color:#000;">Distribution :</div>
<div class="b" style="left:171.3px;top:63.5px;width:235.4px;height:27px;background:#fff;border:1px solid #dedede;"></div>
<div class="t" style="left:175.6px;top:70px;font-size:16px;transform:scaleX(0.9787);color:#000;">Gamma</div>
<svg class="b" style="left:386.5px;top:74.5px;" width="9" height="6" viewBox="0 0 9 6"><path d="M0.500 0.500 H8.500 L4.500 5.500 Z" fill="#111"/></svg>
<div class="b" style="left:18.4px;top:110.4px;width:406.2px;height:273.6px;border:1px solid #dcdcdc;border-radius:3px;"></div>
<div class="b" style="left:29.2px;top:108.4px;width:90.8px;height:5px;background:#f0f0f0;"></div>
<div class="t" style="left:33.2px;top:103px;font-size:16px;transform:scaleX(0.9891);color:#000;-webkit-text-stroke:0.350px #000;">Parameters</div>
<div class="t" style="left:121.3px;top:133px;font-size:16px;transform:scaleX(0.9679);color:#000;">alpha:</div>
<div class="b" style="left:171.4px;top:128.4px;width:197.4px;height:29.1px;background:#fff;border:1px solid #7a7a7a;"></div>
<div class="t" style="left:174.4px;top:134px;font-size:16px;color:#000;">2</div>
<div class="b" style="left:174.2px;top:131.5px;width:1.1px;height:20px;background:#000;"></div>
<div class="b" style="left:371px;top:128.4px;width:35.8px;height:29.1px;background:#f7f7f7;border:1px solid #6b6b6b;"></div>
<svg class="b" style="left:376.9px;top:133.75px;" width="24" height="18" viewBox="0 0 24 18"><rect x="0" y="0.500" width="9" height="7.300" fill="#4a80c2"/><path d="M0.500 4.800 H7" stroke="#9ab4d6" stroke-width="1"/><rect x="9" y="1.200" width="8.300" height="10" fill="#fff"/><g stroke="#c4c4c4" stroke-width="1" fill="none"><path d="M9 1 H24 M16.500 6.800 H24 M0 11.700 H24 M0 17.400 H24 M8.300 7.800 V17.400 M17.300 1 V12"/></g><path d="M16.800 3.400 L12.300 7.300" stroke="#f7931e" stroke-width="1.500"/><path d="M10.300 9.300 L10.800 5.300 L14.600 9 Z" fill="#f7931e"/><rect x="16.700" y="12" width="7.300" height="5" fill="#4a80c2"/></svg>
<div class="t" style="left:128.5px;top:168px;font-size:16px;transform:scaleX(0.9836);color:#000;">beta:</div>
<div class="b" style="left:171.4px;top:163.3px;width:197.4px;height:29.1px;background:#fff;border:1px solid #e2e2e2;"></div>
<div class="t" style="left:174.6px;top:169px;font-size:16px;color:#000;">3</div>
<div class="b" style="left:371px;top:163.3px;width:35.8px;height:29.1px;background:#f7f7f7;border:1px solid #6b6b6b;"></div>
<svg class="b" style="left:376.9px;top:168.65px;" width="24" height="18" viewBox="0 0 24 18"><rect x="0" y="0.500" width="9" height="7.300" fill="#4a80c2"/><path d="M0.500 4.800 H7" stroke="#9ab4d6" stroke-width="1"/><rect x="9" y="1.200" width="8.300" height="10" fill="#fff"/><g stroke="#c4c4c4" stroke-width="1" fill="none"><path d="M9 1 H24 M16.500 6.800 H24 M0 11.700 H24 M0 17.400 H24 M8.300 7.800 V17.400 M17.300 1 V12"/></g><path d="M16.800 3.400 L12.300 7.300" stroke="#f7931e" stroke-width="1.500"/><path d="M10.300 9.300 L10.800 5.300 L14.600 9 Z" fill="#f7931e"/><rect x="16.700" y="12" width="7.300" height="5" fill="#4a80c2"/></svg>
<div class="t" style="left:39.4px;top:406px;font-size:16px;transform:scaleX(0.9906);color:#000;">Shift Distribution :</div>
<div class="b" style="left:171.4px;top:400.3px;width:197.4px;height:29.6px;background:#fff;border:1px solid #e2e2e2;"></div>
<div class="b" style="left:371px;top:400.3px;width:35.8px;height:29.6px;background:#f7f7f7;border:1px solid #6b6b6b;"></div>
<svg class="b" style="left:376.9px;top:405.9px;" width="24" height="18" viewBox="0 0 24 18"><rect x="0" y="0.500" width="9" height="7.300" fill="#4a80c2"/><path d="M0.500 4.800 H7" stroke="#9ab4d6" stroke-width="1"/><rect x="9" y="1.200" width="8.300" height="10" fill="#fff"/><g stroke="#c4c4c4" stroke-width="1" fill="none"><path d="M9 1 H24 M16.500 6.800 H24 M0 11.700 H24 M0 17.400 H24 M8.300 7.800 V17.400 M17.300 1 V12"/></g><path d="M16.800 3.400 L12.300 7.300" stroke="#f7931e" stroke-width="1.500"/><path d="M10.300 9.300 L10.800 5.300 L14.600 9 Z" fill="#f7931e"/><rect x="16.700" y="12" width="7.300" height="5" fill="#4a80c2"/></svg>
<div class="b" style="left:18.4px;top:445.5px;width:406.2px;height:182px;border:1px solid #dcdcdc;border-radius:3px;"></div>
<div class="b" style="left:29.5px;top:443.5px;width:63.3px;height:5px;background:#f0f0f0;"></div>
<div class="t" style="left:33.5px;top:438px;font-size:16px;color:#000;-webkit-text-stroke:0.350px #000;">Bounds</div>
<div class="b" style="left:50px;top:488.1px;width:17.8px;height:17.8px;background:#fff;border:1px solid #333;border-radius:9px;"></div>
<div class="t" style="left:72.3px;top:490px;font-size:16px;color:#000;">X bounds</div>
<div class="b" style="left:50px;top:568.1px;width:17.8px;height:17.8px;background:#fff;border:1px solid #333;border-radius:9px;"></div>
<div class="t" style="left:72.3px;top:570px;font-size:16px;transform:scaleX(0.9832);color:#000;">P bounds</div>
<div class="t" style="left:189.9px;top:473px;font-size:16px;transform:scaleX(0.9615);color:#000;">Xmin :</div>
<div class="b" style="left:241.2px;top:470.6px;width:127.6px;height:29px;background:#fff;border:1px solid #e2e2e2;"></div>
<div class="b" style="left:371px;top:470.6px;width:35.8px;height:29px;background:#f7f7f7;border:1px solid #6b6b6b;"></div>
<svg class="b" style="left:376.9px;top:475.9px;" width="24" height="18" viewBox="0 0 24 18"><rect x="0" y="0.500" width="9" height="7.300" fill="#4a80c2"/><path d="M0.500 4.800 H7" stroke="#9ab4d6" stroke-width="1"/><rect x="9" y="1.200" width="8.300" height="10" fill="#fff"/><g stroke="#c4c4c4" stroke-width="1" fill="none"><path d="M9 1 H24 M16.500 6.800 H24 M0 11.700 H24 M0 17.400 H24 M8.300 7.800 V17.400 M17.300 1 V12"/></g><path d="M16.800 3.400 L12.300 7.300" stroke="#f7931e" stroke-width="1.500"/><path d="M10.300 9.300 L10.800 5.300 L14.600 9 Z" fill="#f7931e"/><rect x="16.700" y="12" width="7.300" height="5" fill="#4a80c2"/></svg>
<div class="t" style="left:186.2px;top:513px;font-size:16px;transform:scaleX(0.9500);color:#000;">Xmax :</div>
<div class="b" style="left:241.2px;top:505.5px;width:127.6px;height:29.1px;background:#fff;border:1px solid #e2e2e2;"></div>
<div class="b" style="left:371px;top:505.5px;width:35.8px;height:29.1px;background:#f7f7f7;border:1px solid #6b6b6b;"></div>
<svg class="b" style="left:376.9px;top:510.85px;" width="24" height="18" viewBox="0 0 24 18"><rect x="0" y="0.500" width="9" height="7.300" fill="#4a80c2"/><path d="M0.500 4.800 H7" stroke="#9ab4d6" stroke-width="1"/><rect x="9" y="1.200" width="8.300" height="10" fill="#fff"/><g stroke="#c4c4c4" stroke-width="1" fill="none"><path d="M9 1 H24 M16.500 6.800 H24 M0 11.700 H24 M0 17.400 H24 M8.300 7.800 V17.400 M17.300 1 V12"/></g><path d="M16.800 3.400 L12.300 7.300" stroke="#f7931e" stroke-width="1.500"/><path d="M10.300 9.300 L10.800 5.300 L14.600 9 Z" fill="#f7931e"/><rect x="16.700" y="12" width="7.300" height="5" fill="#4a80c2"/></svg>
<div class="t" style="left:191.3px;top:558px;font-size:16px;transform:scaleX(0.9307);color:#000;">Pmin :</div>
<div class="b" style="left:241.2px;top:550.4px;width:127.6px;height:29px;background:#fff;border:1px solid #e2e2e2;"></div>
<div class="b" style="left:371px;top:550.4px;width:35.8px;height:29px;background:#f7f7f7;border:1px solid #6b6b6b;"></div>
<svg class="b" style="left:376.9px;top:555.7px;" width="24" height="18" viewBox="0 0 24 18"><rect x="0" y="0.500" width="9" height="7.300" fill="#4a80c2"/><path d="M0.500 4.800 H7" stroke="#9ab4d6" stroke-width="1"/><rect x="9" y="1.200" width="8.300" height="10" fill="#fff"/><g stroke="#c4c4c4" stroke-width="1" fill="none"><path d="M9 1 H24 M16.500 6.800 H24 M0 11.700 H24 M0 17.400 H24 M8.300 7.800 V17.400 M17.300 1 V12"/></g><path d="M16.800 3.400 L12.300 7.300" stroke="#f7931e" stroke-width="1.500"/><path d="M10.300 9.300 L10.800 5.300 L14.600 9 Z" fill="#f7931e"/><rect x="16.700" y="12" width="7.300" height="5" fill="#4a80c2"/></svg>
<div class="t" style="left:187.4px;top:591px;font-size:16px;transform:scaleX(0.9259);color:#000;">Pmax :</div>
<div class="b" style="left:241.2px;top:585.4px;width:127.6px;height:29.2px;background:#fff;border:1px solid #e2e2e2;"></div>
<div class="b" style="left:371px;top:585.4px;width:35.8px;height:29.2px;background:#f7f7f7;border:1px solid #6b6b6b;"></div>
<svg class="b" style="left:376.9px;top:590.8px;" width="24" height="18" viewBox="0 0 24 18"><rect x="0" y="0.500" width="9" height="7.300" fill="#4a80c2"/><path d="M0.500 4.800 H7" stroke="#9ab4d6" stroke-width="1"/><rect x="9" y="1.200" width="8.300" height="10" fill="#fff"/><g stroke="#c4c4c4" stroke-width="1" fill="none"><path d="M9 1 H24 M16.500 6.800 H24 M0 11.700 H24 M0 17.400 H24 M8.300 7.800 V17.400 M17.300 1 V12"/></g><path d="M16.800 3.400 L12.300 7.300" stroke="#f7931e" stroke-width="1.500"/><path d="M10.300 9.300 L10.800 5.300 L14.600 9 Z" fill="#f7931e"/><rect x="16.700" y="12" width="7.300" height="5" fill="#4a80c2"/></svg>
<div class="t" style="left:99.7px;top:646px;font-size:16px;transform:scaleX(0.9425);color:#000;">x values :</div>
<div class="b" style="left:171.4px;top:640.4px;width:197.4px;height:28.8px;background:#fff;border:1px solid #d8d8d8;"></div>
<div class="b" style="left:173px;top:642px;width:194px;height:26px;background:#5fe8f8;overflow:hidden;"><div class="t" style="left:0.500px;top:4px;font-size:16px;">{3.81491663550956;3.63897002497304</div></div>
<div class="b" style="left:371px;top:640.4px;width:35.8px;height:28.8px;background:#f7f7f7;border:1px solid #6b6b6b;"></div>
<svg class="b" style="left:376.9px;top:645.6px;" width="24" height="18" viewBox="0 0 24 18"><rect x="0" y="0.500" width="9" height="7.300" fill="#4a80c2"/><path d="M0.500 4.800 H7" stroke="#9ab4d6" stroke-width="1"/><rect x="9" y="1.200" width="8.300" height="10" fill="#fff"/><g stroke="#c4c4c4" stroke-width="1" fill="none"><path d="M9 1 H24 M16.500 6.800 H24 M0 11.700 H24 M0 17.400 H24 M8.300 7.800 V17.400 M17.300 1 V12"/></g><path d="M16.800 3.400 L12.300 7.300" stroke="#f7931e" stroke-width="1.500"/><path d="M10.300 9.300 L10.800 5.300 L14.600 9 Z" fill="#f7931e"/><rect x="16.700" y="12" width="7.300" height="5" fill="#4a80c2"/></svg>
<div class="t" style="left:110.3px;top:686px;font-size:16px;transform:scaleX(0.9790);color:#000;">Result :</div>
<div class="b" style="left:171.4px;top:678.7px;width:235.4px;height:28.7px;background:#f0f0f0;border:1px solid #dadada;"></div>
<div class="t" style="left:202px;top:684px;font-size:16px;transform:scaleX(0.9926);color:#000;">-7.79664</div>
<div class="t" style="left:335.4px;top:722px;font-size:16px;transform:scaleX(0.9787);color:#000;">Log 10</div>
<div class="b" style="left:388.5px;top:720.2px;width:17.5px;height:17.3px;background:#fff;border:1px solid #8a8a8a;"></div>
<svg class="b" style="left:390.5px;top:722.5px;" width="14" height="13" viewBox="0 0 14 13"><path d="M2.500 6.500 L5.800 10 L11.800 2.500" fill="none" stroke="#8a8a8a" stroke-width="1.700"/></svg>
<div class="b" style="left:18.4px;top:758.3px;width:406.4px;height:99.1px;border:1px solid #dcdcdc;border-radius:3px;"></div>
<div class="b" style="left:29.7px;top:756.3px;width:51px;height:5px;background:#f0f0f0;"></div>
<div class="t" style="left:33.7px;top:751px;font-size:16px;transform:scaleX(0.9644);color:#000;-webkit-text-stroke:0.350px #000;">Errors</div>
<div class="t" style="left:40.3px;top:883px;font-size:16px;color:#000;">Output Location :</div>
<div class="b" style="left:171.4px;top:878.8px;width:215.2px;height:28.5px;background:#fff;border:1px solid #e2e2e2;"></div>
<div class="b" style="left:173px;top:880px;width:210.3px;height:26px;overflow:hidden;"><div class="t" style="left:0.800px;top:4px;font-size:16px;transform:scaleX(0.9496);">='[NPV - two scenarios.xlsx]Model'!$E$89</div></div>
<div class="b" style="left:389.3px;top:878.3px;width:35.5px;height:29.5px;background:#f7f7f7;border:1px solid #6b6b6b;"></div>
<svg class="b" style="left:395.05px;top:883.85px;" width="24" height="18" viewBox="0 0 24 18"><rect x="0" y="0.500" width="9" height="7.300" fill="#4a80c2"/><path d="M0.500 4.800 H7" stroke="#9ab4d6" stroke-width="1"/><rect x="9" y="1.200" width="8.300" height="10" fill="#fff"/><g stroke="#c4c4c4" stroke-width="1" fill="none"><path d="M9 1 H24 M16.500 6.800 H24 M0 11.700 H24 M0 17.400 H24 M8.300 7.800 V17.400 M17.300 1 V12"/></g><path d="M16.800 3.400 L12.300 7.300" stroke="#f7931e" stroke-width="1.500"/><path d="M10.300 9.300 L10.800 5.300 L14.600 9 Z" fill="#f7931e"/><rect x="16.700" y="12" width="7.300" height="5" fill="#4a80c2"/></svg>
<div class="b" style="left:441.3px;top:64.3px;width:771.4px;height:41.2px;background:#fff;border:1px solid #a9a798;border-bottom:none;"></div>
<svg class="b" style="left:449.5px;top:73.5px;" width="20" height="20" viewBox="0 0 20 20"><path d="M1.700 15.500 V1.700 H14.500" fill="none" stroke="#5b93cc" stroke-width="1.500"/><rect x="6.300" y="4.500" width="12" height="13.600" fill="none" stroke="#1b1b1b" stroke-width="1.700"/></svg>
<svg class="b" style="left:488.5px;top:73px;" width="23" height="22" viewBox="0 0 23 22"><path d="M5.500 8.500 V1.800 H15 L17 3.800 V8.500" fill="none" stroke="#5b93cc" stroke-width="1.500"/><path d="M1.500 16.200 V8.800 H21 V16.200 H17.500 V13.300 H5 V16.200 Z" fill="none" stroke="#1b1b1b" stroke-width="1.700"/><path d="M5 16.500 V20.300 H17.500 V16.500" fill="none" stroke="#5b93cc" stroke-width="1.500"/></svg>
<div class="b" style="left:525px;top:67.3px;width:1.2px;height:33.2px;background:#5c5c5c;"></div>
<svg class="b" style="left:539.5px;top:73px;" width="24" height="24" viewBox="0 0 24 24"><circle cx="10.300" cy="10.500" r="8.700" fill="none" stroke="#2b2b2b" stroke-width="1.600"/><path d="M16.800 17 L21.800 22" stroke="#2b2b2b" stroke-width="1.800"/><path d="M7.300 7.800 V13.500 M10.400 6 V13.500 M13.400 9 V13.500" stroke="#5b93cc" stroke-width="1.400"/></svg>
<svg class="b" style="left:580px;top:74px;" width="22" height="24" viewBox="0 0 22 24"><path d="M4.800 2 H1.800 V17.500 H4.800 M16.800 2 H19.800 V17.500 H16.800" fill="none" stroke="#1b1b1b" stroke-width="1.700"/><path d="M7.300 6.500 L14.300 13.500 M14.300 6.500 L7.300 13.500" stroke="#5b93cc" stroke-width="1.700"/><path d="M1 22 H18" stroke="#5b93cc" stroke-width="1.300"/><path d="M16 19.800 L20.500 22 L16 24.200 Z" fill="#5b93cc"/></svg>
<div class="b" style="left:441.3px;top:105px;width:771.4px;height:752.7px;background:#fff;border:1px solid #9f9f9f;"></div>
<div class="b" style="left:493px;top:135px;width:689.3px;height:22px;overflow:hidden;"><div class="t" style="left:1.500px;top:5px;font-size:16px;transform:scaleX(1.0070);color:#111;">GammaProb10({3.81491663550956;3.63897002497304;3.83041340279219;7.0863765301277;5.37</div></div>
<svg class="b" style="left:490.4px;top:157.5px;" width="694.1" height="679.2" viewBox="0 0 694.1 679.2"><rect x="2.500" y="2.500" width="690.1" height="667.2" fill="#fff" stroke="#a3a3a3" stroke-width="1.100"/><g fill="none" stroke="#fc0000" stroke-width="1" shape-rendering="crispEdges"><path d="M52.11 669.2 V63.76 H2.3" /><path d="M86.32 669.2 V46.57 H2.3" /><path d="M90.37 669.2 V53.66 H2.3" /><path d="M90.71 669.2 V54.32 H2.3" /><path d="M103.7 669.2 V86.96 H2.3" /><path d="M125.87 669.2 V153.37 H2.3" /><path d="M130.7 669.2 V168.69 H2.3" /><path d="M165.54 669.2 V285.27 H2.3" /></g><polyline points="2.3,669.8 4.6,614.06 6.9,561.97 9.19,513.35 11.49,468.04 13.79,425.87 16.09,386.68 18.39,350.33 20.68,316.66 22.98,285.54 25.28,256.84 27.58,230.44 29.88,206.21 32.17,184.04 34.47,163.82 36.77,145.45 39.07,128.83 41.37,113.87 43.66,100.46 45.96,88.54 48.26,78 50.56,68.78 52.86,60.8 55.15,54 57.45,48.29 59.75,43.62 62.05,39.92 64.35,37.14 66.64,35.21 68.94,34.1 71.24,33.74 73.54,34.08 75.84,35.09 78.13,36.71 80.43,38.91 82.73,41.65 85.03,44.88 87.33,48.58 89.62,52.71 91.92,57.23 94.22,62.12 96.52,67.35 98.82,72.89 101.11,78.71 103.41,84.79 105.71,91.11 108.01,97.65 110.31,104.37 112.6,111.27 114.9,118.33 117.2,125.52 119.5,132.84 121.8,140.26 124.09,147.77 126.39,155.36 128.69,163.01 130.99,170.71 133.29,178.45 135.58,186.22 137.88,194.01 140.18,201.81 142.48,209.61 144.78,217.4 147.07,225.17 149.37,232.92 151.67,240.64 153.97,248.33 156.27,255.97 158.56,263.56 160.86,271.1 163.16,278.58 165.46,286 167.76,293.36 170.05,300.64 172.35,307.85 174.65,314.99 176.95,322.04 179.25,329.02 181.54,335.91 183.84,342.72 186.14,349.43 188.44,356.06 190.74,362.6 193.03,369.05 195.33,375.41 197.63,381.67 199.93,387.84 202.23,393.91 204.52,399.89 206.82,405.77 209.12,411.55 211.42,417.25 213.72,422.84 216.01,428.34 218.31,433.75 220.61,439.06 222.91,444.27 225.21,449.39 227.5,454.42 229.8,459.36 232.1,464.2 234.4,468.95 236.7,473.61 238.99,478.18 241.29,482.67 243.59,487.06 245.89,491.37 248.19,495.59 250.48,499.73 252.78,503.78 255.08,507.75 257.38,511.64 259.68,515.44 261.97,519.17 264.27,522.82 266.57,526.39 268.87,529.89 271.17,533.31 273.46,536.65 275.76,539.93 278.06,543.13 280.36,546.26 282.66,549.32 284.95,552.32 287.25,555.25 289.55,558.11 291.85,560.91 294.15,563.64 296.44,566.31 298.74,568.92 301.04,571.47 303.34,573.96 305.64,576.4 307.93,578.78 310.23,581.1 312.53,583.37 314.83,585.58 317.13,587.74 319.42,589.85 321.72,591.91 324.02,593.93 326.32,595.89 328.62,597.81 330.91,599.68 333.21,601.5 335.51,603.28 337.81,605.02 340.11,606.71 342.4,608.36 344.7,609.98 347,611.55 349.3,613.08 351.6,614.58 353.89,616.04 356.19,617.46 358.49,618.85 360.79,620.2 363.09,621.52 365.38,622.81 367.68,624.06 369.98,625.28 372.28,626.47 374.58,627.63 376.87,628.76 379.17,629.86 381.47,630.94 383.77,631.98 386.07,633 388.36,634 390.66,634.96 392.96,635.91 395.26,636.82 397.56,637.72 399.85,638.59 402.15,639.44 404.45,640.27 406.75,641.07 409.05,641.85 411.34,642.62 413.64,643.36 415.94,644.09 418.24,644.79 420.54,645.48 422.83,646.14 425.13,646.8 427.43,647.43 429.73,648.04 432.03,648.64 434.32,649.23 436.62,649.8 438.92,650.35 441.22,650.89 443.52,651.41 445.81,651.92 448.11,652.42 450.41,652.9 452.71,653.37 455.01,653.83 457.3,654.28 459.6,654.71 461.9,655.13 464.2,655.54 466.5,655.94 468.79,656.33 471.09,656.71 473.39,657.07 475.69,657.43 477.99,657.78 480.28,658.12 482.58,658.44 484.88,658.76 487.18,659.07 489.48,659.38 491.77,659.67 494.07,659.96 496.37,660.24 498.67,660.51 500.97,660.77 503.26,661.02 505.56,661.27 507.86,661.52 510.16,661.75 512.46,661.98 514.75,662.2 517.05,662.42 519.35,662.63 521.65,662.83 523.95,663.03 526.24,663.22 528.54,663.41 530.84,663.59 533.14,663.77 535.44,663.94 537.73,664.11 540.03,664.27 542.33,664.43 544.63,664.59 546.93,664.74 549.22,664.88 551.52,665.02 553.82,665.16 556.12,665.29 558.42,665.42 560.71,665.55 563.01,665.67 565.31,665.79 567.61,665.91 569.91,666.02 572.2,666.13 574.5,666.23 576.8,666.34 579.1,666.44 581.4,666.53 583.69,666.63 585.99,666.72 588.29,666.81 590.59,666.9 592.89,666.98 595.18,667.06 597.48,667.14 599.78,667.22 602.08,667.29 604.38,667.37 606.67,667.44 608.97,667.51 611.27,667.57 613.57,667.64 615.87,667.7 618.16,667.76 620.46,667.82 622.76,667.88 625.06,667.94 627.36,667.99 629.65,668.04 631.95,668.09 634.25,668.14 636.55,668.19 638.85,668.24 641.14,668.29 643.44,668.33 645.74,668.37 648.04,668.41 650.34,668.46 652.63,668.49 654.93,668.53 657.23,668.57 659.53,668.61 661.83,668.64 664.12,668.68 666.42,668.71 668.72,668.74 671.02,668.77 673.32,668.8 675.61,668.83 677.91,668.86 680.21,668.89 682.51,668.92 684.81,668.94 687.1,668.97 689.4,668.99 691.7,669.02" fill="none" stroke="#4682b4" stroke-width="2.200" stroke-linejoin="round"/><g stroke="#9a9a9a" stroke-width="1"><path d="M-3.2 618.43 H2.3"/><path d="M-3.2 566.56 H2.3"/><path d="M-3.2 514.69 H2.3"/><path d="M-3.2 462.82 H2.3"/><path d="M-3.2 410.95 H2.3"/><path d="M-3.2 359.08 H2.3"/><path d="M-3.2 307.21 H2.3"/><path d="M-3.2 255.34 H2.3"/><path d="M-3.2 203.47 H2.3"/><path d="M-3.2 151.6 H2.3"/><path d="M-3.2 99.73 H2.3"/><path d="M-3.2 47.86 H2.3"/><path d="M117.2 669.2 V673.7"/><path d="M232.1 669.2 V673.7"/><path d="M347 669.2 V673.7"/><path d="M461.9 669.2 V673.7"/><path d="M576.8 669.2 V673.7"/><path d="M691.7 669.2 V673.7"/></g></svg>
<div class="t" style="left:451.8px;top:820px;font-size:16px;transform:scaleX(0.9635);color:#111;">0.00</div>
<div class="t" style="left:451.8px;top:768px;font-size:16px;transform:scaleX(0.9635);color:#111;">0.01</div>
<div class="t" style="left:451.8px;top:716px;font-size:16px;transform:scaleX(0.9635);color:#111;">0.02</div>
<div class="t" style="left:451.8px;top:665px;font-size:16px;transform:scaleX(0.9635);color:#111;">0.03</div>
<div class="t" style="left:451.8px;top:613px;font-size:16px;transform:scaleX(0.9635);color:#111;">0.04</div>
<div class="t" style="left:451.8px;top:561px;font-size:16px;transform:scaleX(0.9635);color:#111;">0.05</div>
<div class="t" style="left:451.8px;top:509px;font-size:16px;transform:scaleX(0.9635);color:#111;">0.06</div>
<div class="t" style="left:451.8px;top:457px;font-size:16px;transform:scaleX(0.9635);color:#111;">0.07</div>
<div class="t" style="left:451.8px;top:405px;font-size:16px;transform:scaleX(0.9635);color:#111;">0.08</div>
<div class="t" style="left:451.8px;top:353px;font-size:16px;transform:scaleX(0.9635);color:#111;">0.09</div>
<div class="t" style="left:451.8px;top:301px;font-size:16px;transform:scaleX(0.9635);color:#111;">0.10</div>
<div class="t" style="left:451.8px;top:250px;font-size:16px;color:#111;">0.11</div>
<div class="t" style="left:451.8px;top:198px;font-size:16px;transform:scaleX(0.9635);color:#111;">0.12</div>
<div class="t" style="left:477.33px;top:836px;font-size:16px;color:#111;">0.00</div>
<div class="t" style="left:592.23px;top:836px;font-size:16px;color:#111;">5.00</div>
<div class="t" style="left:702.68px;top:836px;font-size:16px;color:#111;">10.00</div>
<div class="t" style="left:817.58px;top:836px;font-size:16px;color:#111;">15.00</div>
<div class="t" style="left:932.48px;top:836px;font-size:16px;color:#111;">20.00</div>
<div class="t" style="left:1047.38px;top:836px;font-size:16px;color:#111;">25.00</div>
<div class="t" style="left:1162.28px;top:836px;font-size:16px;color:#111;">30.00</div>
<div class="b" style="left:808px;top:875.2px;width:114.5px;height:34.6px;background:#f3f3f3;border:1px solid #6b6b6b;"></div>
<div class="t" style="left:863.2px;top:884px;font-size:16.3px;transform:scaleX(0.9663);color:#000;">Help</div>
<svg class="b" style="left:817px;top:882.5px;" width="21" height="21" viewBox="0 0 21 21"><circle cx="10.500" cy="10.500" r="10.200" fill="#4a86c5"/><path d="M7 8 C7.200 3.500 14.200 3.800 14 8 C13.800 10.800 10.600 10.800 10.600 13.500" fill="none" stroke="#fff" stroke-width="2.300"/><circle cx="10.600" cy="16.700" r="1.400" fill="#fff"/></svg>
<div class="b" style="left:925px;top:875.2px;width:170.5px;height:34.6px;background:#f3f3f3;border:1px solid #6b6b6b;"></div>
<div class="t" style="left:940.7px;top:884px;font-size:16.3px;transform:scaleX(0.9849);color:#000;">Insert to Worksheet</div>
<div class="b" style="left:1098.3px;top:875.2px;width:114.3px;height:34.6px;background:#f3f3f3;border:1px solid #6b6b6b;"></div>
<div class="t" style="left:1131px;top:884px;font-size:16.3px;transform:scaleX(0.9657);color:#000;">Cancel</div></div><div class="b" style="left:0;top:0;width:1230px;height:934px;border:1.300px solid #1b67cc;box-sizing:border-box;"></div></div>
</body></html>
